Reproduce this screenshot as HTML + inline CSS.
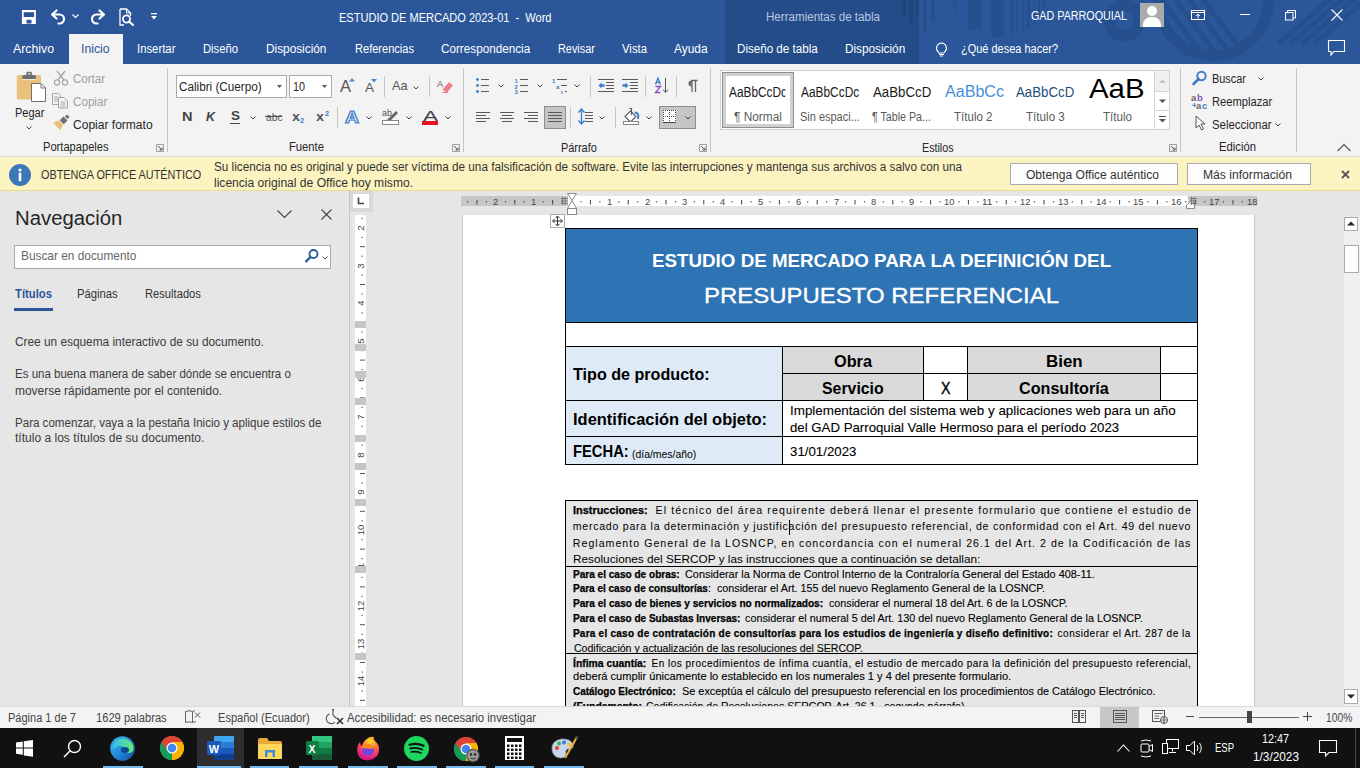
<!DOCTYPE html>
<html><head><meta charset="utf-8"><title>Word</title>
<style>
html,body{margin:0;padding:0;}
body{width:1360px;height:768px;overflow:hidden;position:relative;font-family:"Liberation Sans", sans-serif;background:#e6e6e6;}
svg{overflow:visible;}
</style></head><body>
<div style="position:absolute;left:0px;top:0px;width:1360px;height:64px;background:#2B579A"></div>
<div style="position:absolute;left:725px;top:0px;width:194px;height:64px;background:#244C88"></div>
<svg style="position:absolute;left:0px;top:0px;overflow:hidden" width="1360" height="64" viewBox="0 0 1360 64"><rect x="902" y="0" width="4" height="16" fill="rgba(15,35,75,0.16)"/><rect x="909" y="0" width="4" height="23" fill="rgba(15,35,75,0.16)"/><rect x="916" y="0" width="3" height="17" fill="rgba(15,35,75,0.16)"/><rect x="923" y="0" width="4" height="32" fill="rgba(15,35,75,0.16)"/><rect x="931" y="0" width="4" height="20" fill="rgba(15,35,75,0.16)"/><rect x="968" y="0" width="13" height="30" fill="rgba(15,35,75,0.16)"/><rect x="991" y="0" width="13" height="37" fill="rgba(15,35,75,0.16)"/><rect x="1011" y="0" width="2" height="36" fill="rgba(15,35,75,0.16)"/><rect x="1016" y="0" width="2" height="34" fill="rgba(15,35,75,0.16)"/><rect x="1022" y="0" width="2" height="32" fill="rgba(15,35,75,0.16)"/><rect x="1027" y="0" width="3" height="29" fill="rgba(15,35,75,0.16)"/><rect x="1034" y="0" width="1" height="25" fill="rgba(15,35,75,0.16)"/><rect x="1038" y="0" width="2" height="20" fill="rgba(15,35,75,0.16)"/><rect x="1043" y="0" width="2" height="15" fill="rgba(15,35,75,0.16)"/><rect x="1049" y="0" width="1" height="5" fill="rgba(15,35,75,0.16)"/><path d="M950 0 H957 V13 Z" fill="rgba(15,35,75,0.16)"/><circle cx="1124.6" cy="20.6" r="15" fill="none" stroke="rgba(15,35,75,0.16)" stroke-width="12"/><circle cx="1213.5" cy="0.5" r="55" fill="none" stroke="rgba(15,35,75,0.16)" stroke-width="11"/><clipPath id="bigc"><circle cx="1213.5" cy="0.5" r="49.5"/></clipPath><g clip-path="url(#bigc)" stroke="rgba(15,35,75,0.16)" stroke-width="5"><path d="M1140 -10 L1200 70"/><path d="M1154 -10 L1214 70"/><path d="M1168 -10 L1228 70"/><path d="M1182 -10 L1242 70"/><path d="M1196 -10 L1256 70"/></g><g stroke="rgba(15,35,75,0.16)" stroke-width="5.5"><path d="M1336 -6 L1278 44"/><path d="M1348 -6 L1290 44"/><path d="M1360 -6 L1302 44"/><path d="M1372 -6 L1314 44"/></g></svg>
<div style="position:absolute;left:69px;top:34px;width:54px;height:30px;background:#F3F3F3"></div>
<div style="position:absolute;left:0px;top:64px;width:1360px;height:92px;background:#F3F3F3"></div>
<div style="position:absolute;left:0px;top:156px;width:1360px;height:1px;background:#D6D6D6"></div>
<div style="position:absolute;left:0px;top:157px;width:1360px;height:34px;background:#FCF4C0"></div>
<div style="position:absolute;left:0px;top:190px;width:1360px;height:1px;background:#E8DC8C"></div>
<div style="position:absolute;left:0px;top:191px;width:349px;height:515px;background:#E6E6E6"></div>
<div style="position:absolute;left:349px;top:191px;width:1px;height:515px;background:#C6C6C6"></div>
<div style="position:absolute;left:350px;top:191px;width:1010px;height:515px;background:#E6E6E6"></div>
<div style="position:absolute;left:0px;top:706px;width:1360px;height:22px;background:#F3F3F3"></div>
<div style="position:absolute;left:0px;top:728px;width:1360px;height:40px;background:#111111"></div>
<span style="position:absolute;left:339px;top:10.64px;font-family:'Liberation Sans';font-size:12px;font-weight:normal;color:#FFFFFF;line-height:normal;white-space:pre;transform:scaleX(0.9192);transform-origin:0 0;">ESTUDIO DE MERCADO 2023-01  -  Word</span>
<span style="position:absolute;left:766px;top:9.64px;font-family:'Liberation Sans';font-size:12px;font-weight:normal;color:#B9C8E2;line-height:normal;white-space:pre;transform:scaleX(0.9656);transform-origin:0 0;">Herramientas de tabla</span>
<span style="position:absolute;left:1031px;top:9.14px;font-family:'Liberation Sans';font-size:12px;font-weight:normal;color:#FFFFFF;line-height:normal;white-space:pre;transform:scaleX(0.8961);transform-origin:0 0;">GAD PARROQUIAL</span>
<span style="position:absolute;left:12.7px;top:42.14px;font-family:'Liberation Sans';font-size:12px;font-weight:normal;color:#FFFFFF;line-height:normal;white-space:pre;transform:scaleX(1.0246);transform-origin:0 0;">Archivo</span>
<span style="position:absolute;left:80.7px;top:42.14px;font-family:'Liberation Sans';font-size:12px;font-weight:normal;color:#2B579A;line-height:normal;white-space:pre;transform:scaleX(1.0209);transform-origin:0 0;">Inicio</span>
<span style="position:absolute;left:137.4px;top:42.14px;font-family:'Liberation Sans';font-size:12px;font-weight:normal;color:#FFFFFF;line-height:normal;white-space:pre;transform:scaleX(0.9439);transform-origin:0 0;">Insertar</span>
<span style="position:absolute;left:203.3px;top:42.14px;font-family:'Liberation Sans';font-size:12px;font-weight:normal;color:#FFFFFF;line-height:normal;white-space:pre;transform:scaleX(0.9370);transform-origin:0 0;">Diseño</span>
<span style="position:absolute;left:266px;top:42.14px;font-family:'Liberation Sans';font-size:12px;font-weight:normal;color:#FFFFFF;line-height:normal;white-space:pre;transform:scaleX(0.9844);transform-origin:0 0;">Disposición</span>
<span style="position:absolute;left:354.5px;top:42.14px;font-family:'Liberation Sans';font-size:12px;font-weight:normal;color:#FFFFFF;line-height:normal;white-space:pre;transform:scaleX(0.9214);transform-origin:0 0;">Referencias</span>
<span style="position:absolute;left:441.4px;top:42.14px;font-family:'Liberation Sans';font-size:12px;font-weight:normal;color:#FFFFFF;line-height:normal;white-space:pre;transform:scaleX(0.9761);transform-origin:0 0;">Correspondencia</span>
<span style="position:absolute;left:558px;top:42.14px;font-family:'Liberation Sans';font-size:12px;font-weight:normal;color:#FFFFFF;line-height:normal;white-space:pre;transform:scaleX(0.9047);transform-origin:0 0;">Revisar</span>
<span style="position:absolute;left:621.6px;top:42.14px;font-family:'Liberation Sans';font-size:12px;font-weight:normal;color:#FFFFFF;line-height:normal;white-space:pre;transform:scaleX(0.9448);transform-origin:0 0;">Vista</span>
<span style="position:absolute;left:673.9px;top:42.14px;font-family:'Liberation Sans';font-size:12px;font-weight:normal;color:#FFFFFF;line-height:normal;white-space:pre;transform:scaleX(0.9909);transform-origin:0 0;">Ayuda</span>
<span style="position:absolute;left:737px;top:42.14px;font-family:'Liberation Sans';font-size:12px;font-weight:normal;color:#FFFFFF;line-height:normal;white-space:pre;transform:scaleX(0.9677);transform-origin:0 0;">Diseño de tabla</span>
<span style="position:absolute;left:845.3px;top:42.14px;font-family:'Liberation Sans';font-size:12px;font-weight:normal;color:#FFFFFF;line-height:normal;white-space:pre;transform:scaleX(0.9811);transform-origin:0 0;">Disposición</span>
<span style="position:absolute;left:961px;top:42.14px;font-family:'Liberation Sans';font-size:12px;font-weight:normal;color:#FFFFFF;line-height:normal;white-space:pre;transform:scaleX(0.9145);transform-origin:0 0;">¿Qué desea hacer?</span>
<svg style="position:absolute;left:21px;top:9px;" width="16" height="16" viewBox="0 0 16 16"><path d="M1.8 1.8 H14 V14.2 H1.8 Z" fill="none" stroke="#fff" stroke-width="1.8"/><rect x="1" y="1" width="14" height="2.2" fill="#fff"/><rect x="2" y="8" width="12" height="6.5" fill="#fff"/><rect x="5.5" y="10.8" width="5" height="3.7" fill="#2B579A"/></svg>
<svg style="position:absolute;left:50px;top:9px;" width="17" height="15" viewBox="0 0 17 15"><path d="M2 5.5 L6.5 1.5 M2 5.5 L6.5 9.5 M2.5 5.5 H9.5 A4.5 4.5 0 0 1 9.5 14.5 H8.5" fill="none" stroke="#fff" stroke-width="2.2" stroke-linecap="round"/></svg>
<svg style="position:absolute;left:72px;top:14px;" width="7" height="5" viewBox="0 0 7 5"><path d="M0.5 0.5 L3.5 3.5 L6.5 0.5" fill="none" stroke="#fff" stroke-width="1.1"/></svg>
<svg style="position:absolute;left:89px;top:9px;" width="17" height="15" viewBox="0 0 17 15"><path d="M15 5.5 L10.5 1.5 M15 5.5 L10.5 9.5 M14.5 5.5 H7.5 A4.5 4.5 0 0 0 7.5 14.5 H8.5" fill="none" stroke="#fff" stroke-width="2.2" stroke-linecap="round"/></svg>
<svg style="position:absolute;left:119px;top:8px;" width="16" height="18" viewBox="0 0 16 18"><path d="M1 1 H7.5 L11.5 5 V8" fill="none" stroke="#fff" stroke-width="1.3"/><path d="M7.5 1 V5 H11.5" fill="none" stroke="#fff" stroke-width="1"/><path d="M1 1 V17 H5" fill="none" stroke="#fff" stroke-width="1.3"/><circle cx="7.5" cy="11" r="3.6" fill="none" stroke="#fff" stroke-width="1.7"/><path d="M10 13.5 L14 17" stroke="#fff" stroke-width="2.2" stroke-linecap="round"/></svg>
<svg style="position:absolute;left:151px;top:13px;" width="7" height="8" viewBox="0 0 7 8"><rect x="0" y="0" width="6" height="1.3" fill="#fff"/><path d="M0 3 H6 L3 6.5 Z" fill="#fff"/></svg>
<div style="position:absolute;left:1140px;top:3px;width:24px;height:24px;background:#ABABAB;overflow:hidden"><div style="position:absolute;left:7px;top:3px;width:10px;height:10px;border-radius:50%;background:#fff"></div><div style="position:absolute;left:3px;top:14px;width:18px;height:14px;border-radius:8px 8px 0 0;background:#fff"></div></div>
<svg style="position:absolute;left:1191px;top:10px;" width="15" height="11" viewBox="0 0 15 11"><rect x="0.5" y="0.5" width="13" height="9" fill="none" stroke="#fff" stroke-width="1"/><path d="M0.5 2.5 H13.5" stroke="#fff"/><path d="M7 8.5 V4 M5 6 L7 4 L9 6" fill="none" stroke="#fff" stroke-width="1"/></svg>
<svg style="position:absolute;left:1240px;top:14px;" width="11" height="2" viewBox="0 0 11 2"><rect x="0" y="0" width="10" height="1" fill="#fff"/></svg>
<svg style="position:absolute;left:1285px;top:10px;" width="11" height="11" viewBox="0 0 11 11"><rect x="0.5" y="2.5" width="7.5" height="7.5" fill="none" stroke="#fff"/><path d="M2.5 2.5 V0.5 H10.5 V8 H8" fill="none" stroke="#fff"/></svg>
<svg style="position:absolute;left:1331px;top:9px;" width="12" height="12" viewBox="0 0 12 12"><path d="M0.5 0.5 L11.5 11.5 M11.5 0.5 L0.5 11.5" stroke="#fff" stroke-width="1.1"/></svg>
<svg style="position:absolute;left:935px;top:42px;" width="13" height="15" viewBox="0 0 13 15"><path d="M6.5 1 A5 5 0 0 0 3 9.5 L4 11 H9 L10 9.5 A5 5 0 0 0 6.5 1 Z" fill="none" stroke="#fff" stroke-width="1.1"/><path d="M4 12.5 H9 M5 14 H8" stroke="#fff" stroke-width="1"/></svg>
<svg style="position:absolute;left:1328px;top:40px;" width="18" height="17" viewBox="0 0 18 17"><path d="M0.5 0.5 H16.5 V11.5 H6 L3 15 V11.5 H0.5 Z" fill="none" stroke="#fff" stroke-width="1.1"/></svg>
<svg style="position:absolute;left:16px;top:71px;" width="31" height="32" viewBox="0 0 31 32"><rect x="0.8" y="4" width="24.2" height="24.6" rx="1.5" fill="#EAC17A"/><path d="M6.3 8 V5.5 Q6.3 4 7.8 4 H18.5 Q20 4 20 5.5 V8 Z" fill="#6E6E6E"/><rect x="10.4" y="0.8" width="5.4" height="4" rx="1" fill="#6E6E6E"/><rect x="12.3" y="2" width="1.6" height="1.6" fill="#F3F3F3"/><path d="M6.3 8.5 H20" stroke="#F3F3F3" stroke-width="0.8"/><path d="M15.5 12.5 H25 L29.5 17 V30.5 H15.5 Z" fill="#fff" stroke="#6E6E6E" stroke-width="1"/><path d="M25 12.5 V17 H29.5" fill="none" stroke="#6E6E6E" stroke-width="0.9"/></svg>
<span style="position:absolute;left:14.6px;top:106.04px;font-family:'Liberation Sans';font-size:12px;font-weight:normal;color:#262626;line-height:normal;white-space:pre;transform:scaleX(0.9181);transform-origin:0 0;">Pegar</span>
<svg style="position:absolute;left:26px;top:126px;" width="7" height="5" viewBox="0 0 7 5"><path d="M0.5 0.5 L3 3 L5.5 0.5" fill="none" stroke="#444" stroke-width="1"/></svg>
<svg style="position:absolute;left:53px;top:70px;" width="16" height="16" viewBox="0 0 16 16"><path d="M4 1 L11 10 M12 1 L5 10" stroke="#A6A6A6" stroke-width="1.3"/><circle cx="4" cy="12.5" r="2.6" fill="none" stroke="#A6A6A6" stroke-width="1.2"/><circle cx="12" cy="12.5" r="2.6" fill="none" stroke="#A6A6A6" stroke-width="1.2"/></svg>
<span style="position:absolute;left:72.7px;top:71.94px;font-family:'Liberation Sans';font-size:12px;font-weight:normal;color:#A0A0A0;line-height:normal;white-space:pre;transform:scaleX(0.9598);transform-origin:0 0;">Cortar</span>
<svg style="position:absolute;left:52px;top:93px;" width="17" height="16" viewBox="0 0 17 16"><path d="M0.5 0.5 H6.5 L8.5 2.5 V11.5 H0.5 Z" fill="#F7F2F7" stroke="#A6A6A6"/><path d="M6.5 4.5 H12 L15.5 8 V15 H6.5 Z" fill="#F7F2F7" stroke="#A6A6A6"/><path d="M2 4 H6 M2 6 H6 M2 8 H6 M8.5 9 H13.5 M8.5 11 H13.5 M8.5 13 H13.5" stroke="#A6A6A6" stroke-width="0.9"/></svg>
<span style="position:absolute;left:72.7px;top:94.94px;font-family:'Liberation Sans';font-size:12px;font-weight:normal;color:#A0A0A0;line-height:normal;white-space:pre;transform:scaleX(0.9703);transform-origin:0 0;">Copiar</span>
<svg style="position:absolute;left:52px;top:115px;" width="18" height="17" viewBox="0 0 18 17"><path d="M1 7.5 L7 5.5 L11 9.5 L8.5 15.5 Z" fill="#EAC17A"/><path d="M7.8 5.2 L11.5 1.5 L15.5 5.5 L11.8 9.2 Z" fill="#6E6E6E"/><path d="M13 1.5 L15 -0.5 L17.5 2 L15.5 4 Z" fill="#6E6E6E"/></svg>
<span style="position:absolute;left:72.7px;top:117.74px;font-family:'Liberation Sans';font-size:12px;font-weight:normal;color:#262626;line-height:normal;white-space:pre;transform:scaleX(1.0030);transform-origin:0 0;">Copiar formato</span>
<span style="position:absolute;left:42.7px;top:140.14px;font-family:'Liberation Sans';font-size:12px;font-weight:normal;color:#262626;line-height:normal;white-space:pre;transform:scaleX(0.9276);transform-origin:0 0;">Portapapeles</span>
<svg style="position:absolute;left:156px;top:144px;" width="8" height="8" viewBox="0 0 8 8"><path d="M0.5 0.5 H7.5 V7.5 H0.5 Z" fill="none" stroke="#8A8A8A" stroke-width="0.8"/><path d="M2 2 L6 6 M6 3.5 V6 H3.5" fill="none" stroke="#555" stroke-width="1"/></svg>
<div style="position:absolute;left:167px;top:68px;width:1px;height:84px;background:#C6C6C6"></div>
<div style="position:absolute;left:176px;top:75px;width:109px;height:21px;background:#fff;border:1px solid #ABABAB"></div>
<span style="position:absolute;left:179.3px;top:79.64px;font-family:'Liberation Sans';font-size:12px;font-weight:normal;color:#262626;line-height:normal;white-space:pre;transform:scaleX(0.9765);transform-origin:0 0;">Calibri (Cuerpo)</span>
<svg style="position:absolute;left:277px;top:85px;" width="6" height="4" viewBox="0 0 6 4"><path d="M0 0 H5 L2.5 3 Z" fill="#555"/></svg>
<div style="position:absolute;left:289px;top:75px;width:41px;height:21px;background:#fff;border:1px solid #ABABAB"></div>
<span style="position:absolute;left:292.5px;top:79.64px;font-family:'Liberation Sans';font-size:12px;font-weight:normal;color:#262626;line-height:normal;white-space:pre;transform:scaleX(0.8990);transform-origin:0 0;">10</span>
<svg style="position:absolute;left:322px;top:85px;" width="6" height="4" viewBox="0 0 6 4"><path d="M0 0 H5 L2.5 3 Z" fill="#555"/></svg>
<span style="position:absolute;left:340px;top:77.52px;font-family:'Liberation Sans';font-size:16px;font-weight:normal;color:#555;line-height:normal;white-space:pre;transform:scaleX(1.0307);transform-origin:0 0;">A</span>
<svg style="position:absolute;left:349px;top:78px;" width="6" height="4" viewBox="0 0 6 4"><path d="M0 3.5 L3 0 L6 3.5 Z" fill="#4A8BD0"/></svg>
<span style="position:absolute;left:365px;top:80.23px;font-family:'Liberation Sans';font-size:13px;font-weight:normal;color:#555;line-height:normal;white-space:pre;transform:scaleX(1.0380);transform-origin:0 0;">A</span>
<svg style="position:absolute;left:371px;top:79px;" width="6" height="4" viewBox="0 0 6 4"><path d="M0 0 L3 3.5 L6 0 Z" fill="#4A8BD0"/></svg>
<div style="position:absolute;left:384px;top:76px;width:1px;height:21px;background:#C6C6C6"></div>
<span style="position:absolute;left:392px;top:78.28px;font-family:'Liberation Sans';font-size:13.5px;font-weight:normal;color:#555;line-height:normal;white-space:pre;transform:scaleX(0.9387);transform-origin:0 0;">Aa</span>
<svg style="position:absolute;left:413px;top:86px;" width="7" height="5" viewBox="0 0 7 5"><path d="M0.5 0.5 L3 3 L5.5 0.5" fill="none" stroke="#444" stroke-width="1"/></svg>
<div style="position:absolute;left:429px;top:76px;width:1px;height:21px;background:#C6C6C6"></div>
<svg style="position:absolute;left:437px;top:78px;" width="17" height="16" viewBox="0 0 17 16"><text x="0" y="9" font-family="Liberation Sans" font-size="9" fill="#555">A</text><path d="M6 11 L12 4 L16 7.5 L10 14.5 Z" fill="#E8818A"/><path d="M6 11 L10 14.5 H5.5" fill="none" stroke="#E8818A" stroke-width="1.2"/></svg>
<span style="position:absolute;left:181.5px;top:109.69px;font-family:'Liberation Sans';font-size:12.5px;font-weight:bold;color:#444;line-height:normal;white-space:pre;transform:scaleX(1.1632);transform-origin:0 0;">N</span>
<span style="position:absolute;left:205.5px;top:109.69px;font-family:'Liberation Sans';font-size:12.5px;font-weight:bold;color:#444;line-height:normal;white-space:pre;transform:scaleX(0.9970);transform-origin:0 0;font-style:italic">K</span>
<span style="position:absolute;left:230.5px;top:109.19px;font-family:'Liberation Sans';font-size:12.5px;font-weight:bold;color:#444;line-height:normal;white-space:pre;transform:scaleX(1.0795);transform-origin:0 0;">S</span>
<div style="position:absolute;left:230px;top:123px;width:10px;height:1px;background:#444"></div>
<svg style="position:absolute;left:250px;top:116px;" width="7" height="5" viewBox="0 0 7 5"><path d="M0.5 0.5 L3 3 L5.5 0.5" fill="none" stroke="#444" stroke-width="1"/></svg>
<span style="position:absolute;left:265.5px;top:110.55px;font-family:'Liberation Sans';font-size:11px;font-weight:normal;color:#555;line-height:normal;white-space:pre;transform:scaleX(0.9303);transform-origin:0 0;">abc</span>
<div style="position:absolute;left:265px;top:116px;width:17px;height:1px;background:#555"></div>
<span style="position:absolute;left:291.5px;top:109.23px;font-family:'Liberation Sans';font-size:13px;font-weight:bold;color:#555;line-height:normal;white-space:pre;transform:scaleX(1.1065);transform-origin:0 0;">x</span>
<span style="position:absolute;left:300px;top:116.67px;font-family:'Liberation Sans';font-size:7px;font-weight:bold;color:#3B7BC8;line-height:normal;white-space:pre;transform:scaleX(1.0275);transform-origin:0 0;">2</span>
<span style="position:absolute;left:316px;top:109.23px;font-family:'Liberation Sans';font-size:13px;font-weight:bold;color:#555;line-height:normal;white-space:pre;transform:scaleX(1.1065);transform-origin:0 0;">x</span>
<span style="position:absolute;left:325px;top:109.67px;font-family:'Liberation Sans';font-size:7px;font-weight:bold;color:#3B7BC8;line-height:normal;white-space:pre;transform:scaleX(1.0275);transform-origin:0 0;">2</span>
<div style="position:absolute;left:337px;top:107px;width:1px;height:21px;background:#C6C6C6"></div>
<span style="position:absolute;left:345px;top:108.07px;font-family:'Liberation Sans';font-size:16.5px;font-weight:bold;color:#fff;line-height:normal;white-space:pre;transform:scaleX(1.1749);transform-origin:0 0;-webkit-text-stroke:1.2px #3F7FCB">A</span>
<svg style="position:absolute;left:366px;top:116px;" width="7" height="5" viewBox="0 0 7 5"><path d="M0.5 0.5 L3 3 L5.5 0.5" fill="none" stroke="#444" stroke-width="1"/></svg>
<svg style="position:absolute;left:382px;top:108px;" width="18" height="18" viewBox="0 0 18 18"><text x="0" y="8" font-family="Liberation Sans" font-size="9" fill="#555">ab</text><path d="M5 12 L14 3 L16 5 L7 14 Z" fill="#666"/><rect x="0.5" y="12.5" width="16" height="4" fill="#fff" stroke="#888"/></svg>
<svg style="position:absolute;left:406px;top:116px;" width="7" height="5" viewBox="0 0 7 5"><path d="M0.5 0.5 L3 3 L5.5 0.5" fill="none" stroke="#444" stroke-width="1"/></svg>
<span style="position:absolute;left:422.5px;top:106.92px;font-family:'Liberation Sans';font-size:15px;font-weight:normal;color:#444;line-height:normal;white-space:pre;transform:scaleX(1.4993);transform-origin:0 0;">A</span>
<div style="position:absolute;left:422px;top:121px;width:16px;height:4px;background:#E81123"></div>
<svg style="position:absolute;left:445px;top:116px;" width="7" height="5" viewBox="0 0 7 5"><path d="M0.5 0.5 L3 3 L5.5 0.5" fill="none" stroke="#444" stroke-width="1"/></svg>
<span style="position:absolute;left:289px;top:140.24px;font-family:'Liberation Sans';font-size:12px;font-weight:normal;color:#262626;line-height:normal;white-space:pre;transform:scaleX(0.9368);transform-origin:0 0;">Fuente</span>
<svg style="position:absolute;left:452px;top:144px;" width="8" height="8" viewBox="0 0 8 8"><path d="M0.5 0.5 H7.5 V7.5 H0.5 Z" fill="none" stroke="#8A8A8A" stroke-width="0.8"/><path d="M2 2 L6 6 M6 3.5 V6 H3.5" fill="none" stroke="#555" stroke-width="1"/></svg>
<div style="position:absolute;left:463px;top:68px;width:1px;height:84px;background:#C6C6C6"></div>
<svg style="position:absolute;left:475px;top:77px;" width="15" height="16" viewBox="0 0 15 16"><g shape-rendering="crispEdges"><rect x="6" y="2" width="8" height="1" fill="#5A5A5A"/><rect x="6" y="8" width="8" height="1" fill="#5A5A5A"/><rect x="6" y="14" width="8" height="1" fill="#5A5A5A"/></g><circle cx="2.5" cy="2.5" r="1.4" fill="#3B7BC8"/><circle cx="2.5" cy="8.5" r="1.4" fill="#3B7BC8"/><circle cx="2.5" cy="14.5" r="1.4" fill="#3B7BC8"/></svg>
<svg style="position:absolute;left:498px;top:84px;" width="7" height="5" viewBox="0 0 7 5"><path d="M0.5 0.5 L3 3 L5.5 0.5" fill="none" stroke="#444" stroke-width="1"/></svg>
<svg style="position:absolute;left:514px;top:77px;" width="16" height="17" viewBox="0 0 16 17"><text x="0.5" y="5.5" font-family="Liberation Sans" font-size="6" font-weight="bold" fill="#3B7BC8">1</text><text x="0.5" y="11.5" font-family="Liberation Sans" font-size="6" font-weight="bold" fill="#3B7BC8">2</text><text x="0.5" y="17" font-family="Liberation Sans" font-size="6" font-weight="bold" fill="#3B7BC8">3</text><g shape-rendering="crispEdges"><rect x="6" y="2" width="8" height="1" fill="#5A5A5A"/><rect x="6" y="8" width="8" height="1" fill="#5A5A5A"/><rect x="6" y="14" width="8" height="1" fill="#5A5A5A"/></g></svg>
<svg style="position:absolute;left:537px;top:84px;" width="7" height="5" viewBox="0 0 7 5"><path d="M0.5 0.5 L3 3 L5.5 0.5" fill="none" stroke="#444" stroke-width="1"/></svg>
<svg style="position:absolute;left:552px;top:77px;" width="18" height="17" viewBox="0 0 18 17"><text x="0" y="5.5" font-family="Liberation Sans" font-size="6" font-weight="bold" fill="#3B7BC8">1</text><text x="4" y="11.5" font-family="Liberation Sans" font-size="6" font-weight="bold" fill="#3B7BC8">a</text><text x="9" y="17" font-family="Liberation Sans" font-size="6" font-weight="bold" fill="#3B7BC8">i</text><g shape-rendering="crispEdges"><rect x="5" y="2" width="10" height="1" fill="#5A5A5A"/><rect x="9" y="8" width="6" height="1" fill="#5A5A5A"/><rect x="13" y="14" width="2" height="1" fill="#5A5A5A"/></g></svg>
<svg style="position:absolute;left:574px;top:84px;" width="7" height="5" viewBox="0 0 7 5"><path d="M0.5 0.5 L3 3 L5.5 0.5" fill="none" stroke="#444" stroke-width="1"/></svg>
<div style="position:absolute;left:590px;top:76px;width:1px;height:21px;background:#C6C6C6"></div>
<svg style="position:absolute;left:598px;top:79px;" width="17" height="13" viewBox="0 0 17 13"><g shape-rendering="crispEdges"><rect x="0" y="0" width="16" height="1" fill="#5A5A5A"/><rect x="8" y="3" width="8" height="1" fill="#5A5A5A"/><rect x="8" y="6" width="8" height="1" fill="#5A5A5A"/><rect x="8" y="9" width="8" height="1" fill="#5A5A5A"/><rect x="0" y="12" width="16" height="1" fill="#5A5A5A"/></g><path d="M0.5 6.5 L3.5 3.5 V5.3 H6.5 V7.7 H3.5 V9.5 Z" fill="#3B7BC8"/></svg>
<svg style="position:absolute;left:622px;top:79px;" width="17" height="13" viewBox="0 0 17 13"><g shape-rendering="crispEdges"><rect x="0" y="0" width="16" height="1" fill="#5A5A5A"/><rect x="8" y="3" width="8" height="1" fill="#5A5A5A"/><rect x="8" y="6" width="8" height="1" fill="#5A5A5A"/><rect x="8" y="9" width="8" height="1" fill="#5A5A5A"/><rect x="0" y="12" width="16" height="1" fill="#5A5A5A"/></g><path d="M6.5 6.5 L3.5 3.5 V5.3 H0.5 V7.7 H3.5 V9.5 Z" fill="#3B7BC8"/></svg>
<div style="position:absolute;left:645px;top:76px;width:1px;height:21px;background:#C6C6C6"></div>
<svg style="position:absolute;left:654px;top:77px;" width="15" height="17" viewBox="0 0 15 17"><path d="M1.5 7.5 L4 1 L6.5 7.5 M2.5 5.3 H5.5" fill="none" stroke="#3B7BC8" stroke-width="1.3"/><path d="M1.5 9.5 H6.5 L1.5 15.5 H6.5" fill="none" stroke="#8B4FB8" stroke-width="1.3"/><path d="M11.5 1 V15 M9 12.5 L11.5 15.5 L14 12.5" fill="none" stroke="#555" stroke-width="1"/></svg>
<div style="position:absolute;left:676px;top:76px;width:1px;height:21px;background:#C6C6C6"></div>
<svg style="position:absolute;left:687px;top:80px;" width="11" height="12" viewBox="0 0 11 12"><path d="M4 0.5 H10.5 M5 0.5 V12 M8.5 0.5 V12" stroke="#666" stroke-width="1.3" fill="none"/><path d="M4.5 0.5 A3 3 0 0 0 4.5 6.5 Z" fill="#666"/></svg>
<svg style="position:absolute;left:476px;top:112px;" width="15" height="10" viewBox="0 0 15 10"><g shape-rendering="crispEdges"><rect x="0" y="0" width="14" height="1" fill="#5A5A5A"/><rect x="0" y="3" width="10" height="1" fill="#5A5A5A"/><rect x="0" y="6" width="14" height="1" fill="#5A5A5A"/><rect x="0" y="9" width="10" height="1" fill="#5A5A5A"/></g></svg>
<svg style="position:absolute;left:500px;top:112px;" width="15" height="10" viewBox="0 0 15 10"><g shape-rendering="crispEdges"><rect x="0" y="0" width="14" height="1" fill="#5A5A5A"/><rect x="2" y="3" width="10" height="1" fill="#5A5A5A"/><rect x="0" y="6" width="14" height="1" fill="#5A5A5A"/><rect x="2" y="9" width="10" height="1" fill="#5A5A5A"/></g></svg>
<svg style="position:absolute;left:524px;top:112px;" width="15" height="10" viewBox="0 0 15 10"><g shape-rendering="crispEdges"><rect x="0" y="0" width="14" height="1" fill="#5A5A5A"/><rect x="4" y="3" width="10" height="1" fill="#5A5A5A"/><rect x="0" y="6" width="14" height="1" fill="#5A5A5A"/><rect x="4" y="9" width="10" height="1" fill="#5A5A5A"/></g></svg>
<div style="position:absolute;left:544px;top:106px;width:20px;height:21px;background:#C5C5C5;border:1px solid #8E8E8E"></div>
<svg style="position:absolute;left:548px;top:112px;" width="15" height="10" viewBox="0 0 15 10"><g shape-rendering="crispEdges"><rect x="0" y="0" width="14" height="1" fill="#5A5A5A"/><rect x="0" y="3" width="14" height="1" fill="#5A5A5A"/><rect x="0" y="6" width="14" height="1" fill="#5A5A5A"/><rect x="0" y="9" width="14" height="1" fill="#5A5A5A"/></g></svg>
<div style="position:absolute;left:570px;top:107px;width:1px;height:21px;background:#C6C6C6"></div>
<svg style="position:absolute;left:578px;top:108px;" width="16" height="18" viewBox="0 0 16 18"><path d="M3.5 2 V15" stroke="#3B7BC8" stroke-width="1.3"/><path d="M0.5 4.5 L3.5 1 L6.5 4.5 M0.5 12.5 L3.5 16 L6.5 12.5" fill="none" stroke="#3B7BC8" stroke-width="1.4"/><g shape-rendering="crispEdges"><rect x="7" y="4" width="8" height="1" fill="#5A5A5A"/><rect x="7" y="7" width="8" height="1" fill="#5A5A5A"/><rect x="7" y="10" width="8" height="1" fill="#5A5A5A"/><rect x="7" y="13" width="8" height="1" fill="#5A5A5A"/></g></svg>
<svg style="position:absolute;left:599px;top:116px;" width="7" height="5" viewBox="0 0 7 5"><path d="M0.5 0.5 L3 3 L5.5 0.5" fill="none" stroke="#444" stroke-width="1"/></svg>
<div style="position:absolute;left:615px;top:107px;width:1px;height:21px;background:#C6C6C6"></div>
<svg style="position:absolute;left:622px;top:108px;" width="18" height="17" viewBox="0 0 18 17"><path d="M3 8.5 L8.5 3 L14 8.5 L8.5 14 Z" fill="#fff" stroke="#5A5A5A" stroke-width="1.1"/><path d="M7.5 0.5 H9.5 V7" fill="none" stroke="#5A5A5A" stroke-width="1.1"/><path d="M12.5 4.5 Q17.5 4.5 16 11" fill="none" stroke="#3B7BC8" stroke-width="2"/><rect x="1.5" y="13.5" width="15" height="3" fill="#fff" stroke="#888"/></svg>
<svg style="position:absolute;left:646px;top:116px;" width="7" height="5" viewBox="0 0 7 5"><path d="M0.5 0.5 L3 3 L5.5 0.5" fill="none" stroke="#444" stroke-width="1"/></svg>
<div style="position:absolute;left:659px;top:106px;width:35px;height:21px;background:#C5C5C5;border:1px solid #8E8E8E"></div>
<svg style="position:absolute;left:663px;top:110px;" width="14" height="14" viewBox="0 0 14 14"><rect x="0" y="0" width="13" height="12" fill="#fff"/><g shape-rendering="crispEdges" fill="#444"><rect x="0" y="0" width="1" height="1"/><rect x="0" y="6" width="1" height="1"/><rect x="2" y="0" width="1" height="1"/><rect x="2" y="6" width="1" height="1"/><rect x="4" y="0" width="1" height="1"/><rect x="4" y="6" width="1" height="1"/><rect x="6" y="0" width="1" height="1"/><rect x="6" y="6" width="1" height="1"/><rect x="8" y="0" width="1" height="1"/><rect x="8" y="6" width="1" height="1"/><rect x="10" y="0" width="1" height="1"/><rect x="10" y="6" width="1" height="1"/><rect x="12" y="0" width="1" height="1"/><rect x="12" y="6" width="1" height="1"/><rect x="0" y="2" width="1" height="1"/><rect x="0" y="4" width="1" height="1"/><rect x="0" y="6" width="1" height="1"/><rect x="0" y="8" width="1" height="1"/><rect x="0" y="10" width="1" height="1"/><rect x="6" y="2" width="1" height="1"/><rect x="6" y="4" width="1" height="1"/><rect x="6" y="6" width="1" height="1"/><rect x="6" y="8" width="1" height="1"/><rect x="6" y="10" width="1" height="1"/><rect x="12" y="2" width="1" height="1"/><rect x="12" y="4" width="1" height="1"/><rect x="12" y="6" width="1" height="1"/><rect x="12" y="8" width="1" height="1"/><rect x="12" y="10" width="1" height="1"/><rect x="0" y="12" width="13" height="1"/></g></svg>
<svg style="position:absolute;left:685px;top:116px;" width="7" height="5" viewBox="0 0 7 5"><path d="M0.5 0.5 L3 3 L5.5 0.5" fill="none" stroke="#333" stroke-width="1"/></svg>
<span style="position:absolute;left:560.6px;top:140.54px;font-family:'Liberation Sans';font-size:12px;font-weight:normal;color:#262626;line-height:normal;white-space:pre;transform:scaleX(0.9097);transform-origin:0 0;">Párrafo</span>
<svg style="position:absolute;left:699px;top:144px;" width="8" height="8" viewBox="0 0 8 8"><path d="M0.5 0.5 H7.5 V7.5 H0.5 Z" fill="none" stroke="#8A8A8A" stroke-width="0.8"/><path d="M2 2 L6 6 M6 3.5 V6 H3.5" fill="none" stroke="#555" stroke-width="1"/></svg>
<div style="position:absolute;left:710px;top:68px;width:1px;height:84px;background:#C6C6C6"></div>
<div style="position:absolute;left:720px;top:70px;width:448px;height:58px;background:#fff;border:1px solid #D0D0D0"></div>
<div style="position:absolute;left:722px;top:72px;width:70px;height:54px;border:1px solid #8E8E8E;box-shadow:inset 0 0 0 3px #D0D0D0;background:#fff"></div>
<span style="position:absolute;left:728.8px;top:84.33px;font-family:'Liberation Sans';font-size:14px;font-weight:normal;color:#1A1A1A;line-height:normal;white-space:pre;transform:scaleX(0.8471);transform-origin:0 0;clip-path:inset(0 2px 0 0)">AaBbCcDc</span>
<span style="position:absolute;left:733.5px;top:110.24px;font-family:'Liberation Sans';font-size:12px;font-weight:normal;color:#5A5A5A;line-height:normal;white-space:pre;transform:scaleX(0.9886);transform-origin:0 0;">¶ Normal</span>
<span style="position:absolute;left:800.6px;top:84.33px;font-family:'Liberation Sans';font-size:14px;font-weight:normal;color:#1A1A1A;line-height:normal;white-space:pre;transform:scaleX(0.8500);transform-origin:0 0;">AaBbCcDc</span>
<span style="position:absolute;left:799.5px;top:110.24px;font-family:'Liberation Sans';font-size:12px;font-weight:normal;color:#5A5A5A;line-height:normal;white-space:pre;transform:scaleX(0.9148);transform-origin:0 0;">Sin espaci...</span>
<span style="position:absolute;left:872.5px;top:84.33px;font-family:'Liberation Sans';font-size:14px;font-weight:normal;color:#1A1A1A;line-height:normal;white-space:pre;transform:scaleX(0.9468);transform-origin:0 0;">AaBbCcD</span>
<span style="position:absolute;left:871.6px;top:110.24px;font-family:'Liberation Sans';font-size:12px;font-weight:normal;color:#5A5A5A;line-height:normal;white-space:pre;transform:scaleX(0.8890);transform-origin:0 0;">¶ Table Pa...</span>
<span style="position:absolute;left:944.5px;top:82.52px;font-family:'Liberation Sans';font-size:16px;font-weight:normal;color:#4A8ED6;line-height:normal;white-space:pre;transform:scaleX(1.0052);transform-origin:0 0;">AaBbCc</span>
<span style="position:absolute;left:954px;top:110.24px;font-family:'Liberation Sans';font-size:12px;font-weight:normal;color:#5A5A5A;line-height:normal;white-space:pre;transform:scaleX(0.9620);transform-origin:0 0;">Título 2</span>
<span style="position:absolute;left:1016.4px;top:84.33px;font-family:'Liberation Sans';font-size:14px;font-weight:normal;color:#1F4E79;line-height:normal;white-space:pre;transform:scaleX(0.9468);transform-origin:0 0;">AaBbCcD</span>
<span style="position:absolute;left:1026px;top:110.24px;font-family:'Liberation Sans';font-size:12px;font-weight:normal;color:#5A5A5A;line-height:normal;white-space:pre;transform:scaleX(0.9695);transform-origin:0 0;">Título 3</span>
<span style="position:absolute;left:1088.7px;top:73.06px;font-family:'Liberation Sans';font-size:28px;font-weight:normal;color:#000;line-height:normal;white-space:pre;transform:scaleX(1.0506);transform-origin:0 0;">AaB</span>
<span style="position:absolute;left:1103px;top:110.24px;font-family:'Liberation Sans';font-size:12px;font-weight:normal;color:#5A5A5A;line-height:normal;white-space:pre;transform:scaleX(0.9663);transform-origin:0 0;">Título</span>
<div style="position:absolute;left:1154px;top:70px;width:1px;height:59px;background:#D4D4D4"></div>
<div style="position:absolute;left:1155px;top:71px;width:14px;height:20px;background:#F0F0F0"></div>
<svg style="position:absolute;left:1159px;top:79px;" width="8" height="5" viewBox="0 0 8 5"><path d="M0 4 L3.5 0.5 L7 4 Z" fill="#C0C0C0"/></svg>
<div style="position:absolute;left:1155px;top:91px;width:14px;height:1px;background:#D4D4D4"></div>
<svg style="position:absolute;left:1159px;top:99px;" width="8" height="5" viewBox="0 0 8 5"><path d="M0 0.5 L3.5 4 L7 0.5 Z" fill="#555"/></svg>
<div style="position:absolute;left:1155px;top:110px;width:14px;height:1px;background:#D4D4D4"></div>
<svg style="position:absolute;left:1159px;top:116px;" width="8" height="8" viewBox="0 0 8 8"><rect x="0" y="0" width="7" height="1" fill="#555"/><path d="M0 3 L3.5 6.5 L7 3 Z" fill="#555"/></svg>
<span style="position:absolute;left:921.5px;top:140.54px;font-family:'Liberation Sans';font-size:12px;font-weight:normal;color:#262626;line-height:normal;white-space:pre;transform:scaleX(0.8912);transform-origin:0 0;">Estilos</span>
<svg style="position:absolute;left:1169px;top:144px;" width="8" height="8" viewBox="0 0 8 8"><path d="M0.5 0.5 H7.5 V7.5 H0.5 Z" fill="none" stroke="#8A8A8A" stroke-width="0.8"/><path d="M2 2 L6 6 M6 3.5 V6 H3.5" fill="none" stroke="#555" stroke-width="1"/></svg>
<div style="position:absolute;left:1180px;top:68px;width:1px;height:84px;background:#C6C6C6"></div>
<svg style="position:absolute;left:1192px;top:71px;" width="15" height="14" viewBox="0 0 15 14"><circle cx="9.5" cy="5" r="4.2" fill="none" stroke="#3F7CC0" stroke-width="1.9"/><path d="M6.5 8 L1.5 13" stroke="#3F7CC0" stroke-width="2.6" stroke-linecap="round"/></svg>
<span style="position:absolute;left:1211.7px;top:72.14px;font-family:'Liberation Sans';font-size:12px;font-weight:normal;color:#262626;line-height:normal;white-space:pre;transform:scaleX(0.9077);transform-origin:0 0;">Buscar</span>
<svg style="position:absolute;left:1258px;top:77px;" width="7" height="5" viewBox="0 0 7 5"><path d="M0.5 0.5 L3 3 L5.5 0.5" fill="none" stroke="#444" stroke-width="1"/></svg>
<svg style="position:absolute;left:1191px;top:93px;" width="18" height="16" viewBox="0 0 18 16"><text x="0" y="8" font-family="Liberation Sans" font-weight="bold" font-size="9.5" fill="#666">a</text><text x="6" y="8" font-family="Liberation Sans" font-weight="bold" font-size="9.5" fill="#8B4FB8">b</text><text x="5" y="15.5" font-family="Liberation Sans" font-weight="bold" font-size="9.5" fill="#666">a</text><text x="11" y="15.5" font-family="Liberation Sans" font-weight="bold" font-size="9.5" fill="#3B7BC8">c</text><path d="M3.5 10 V13 M1.5 11.5 L3.5 13.5 L5 12" fill="none" stroke="#3B7BC8" stroke-width="1"/></svg>
<span style="position:absolute;left:1211.7px;top:94.94px;font-family:'Liberation Sans';font-size:12px;font-weight:normal;color:#262626;line-height:normal;white-space:pre;transform:scaleX(0.9321);transform-origin:0 0;">Reemplazar</span>
<svg style="position:absolute;left:1195px;top:115px;" width="11" height="16" viewBox="0 0 11 16"><path d="M1 1 V13 L4 10 L6.5 15 L8.5 14 L6 9 H10 Z" fill="#fff" stroke="#555" stroke-width="1"/></svg>
<span style="position:absolute;left:1211.7px;top:117.94px;font-family:'Liberation Sans';font-size:12px;font-weight:normal;color:#262626;line-height:normal;white-space:pre;transform:scaleX(0.9505);transform-origin:0 0;">Seleccionar</span>
<svg style="position:absolute;left:1275px;top:123px;" width="7" height="5" viewBox="0 0 7 5"><path d="M0.5 0.5 L3 3 L5.5 0.5" fill="none" stroke="#444" stroke-width="1"/></svg>
<span style="position:absolute;left:1219px;top:140.44px;font-family:'Liberation Sans';font-size:12px;font-weight:normal;color:#262626;line-height:normal;white-space:pre;transform:scaleX(0.9401);transform-origin:0 0;">Edición</span>
<div style="position:absolute;left:1296px;top:68px;width:1px;height:84px;background:#C6C6C6"></div>
<svg style="position:absolute;left:1337px;top:143px;" width="15" height="9" viewBox="0 0 15 9"><path d="M0.5 8 L7 1.5 L13.5 8" fill="none" stroke="#555" stroke-width="1.2"/></svg>
<svg style="position:absolute;left:9px;top:164px;" width="22" height="22" viewBox="0 0 22 22"><circle cx="11" cy="11" r="11" fill="#3C77B8"/><circle cx="11" cy="6" r="1.6" fill="#fff"/><rect x="9.7" y="8.7" width="2.6" height="8.5" fill="#fff"/></svg>
<span style="position:absolute;left:40.6px;top:168.14px;font-family:'Liberation Sans';font-size:12px;font-weight:normal;color:#333;line-height:normal;white-space:pre;transform:scaleX(0.9033);transform-origin:0 0;">OBTENGA OFFICE AUTÉNTICO</span>
<span style="position:absolute;left:213.9px;top:160.14px;font-family:'Liberation Sans';font-size:12px;font-weight:normal;color:#333;line-height:normal;white-space:pre;transform:scaleX(0.9777);transform-origin:0 0;">Su licencia no es original y puede ser víctima de una falsificación de software. Evite las interrupciones y mantenga sus archivos a salvo con una</span>
<span style="position:absolute;left:213.9px;top:175.64px;font-family:'Liberation Sans';font-size:12px;font-weight:normal;color:#333;line-height:normal;white-space:pre;transform:scaleX(1.0057);transform-origin:0 0;">licencia original de Office hoy mismo.</span>
<div style="position:absolute;left:1010px;top:163px;width:166px;height:20px;background:#FDFDFD;border:1px solid #ABABAB"></div>
<span style="position:absolute;left:1026px;top:167.74px;font-family:'Liberation Sans';font-size:12px;font-weight:normal;color:#333;line-height:normal;white-space:pre;transform:scaleX(1.0035);transform-origin:0 0;">Obtenga Office auténtico</span>
<div style="position:absolute;left:1187px;top:163px;width:122px;height:20px;background:#FDFDFD;border:1px solid #ABABAB"></div>
<span style="position:absolute;left:1203px;top:167.74px;font-family:'Liberation Sans';font-size:12px;font-weight:normal;color:#333;line-height:normal;white-space:pre;transform:scaleX(1.0110);transform-origin:0 0;">Más información</span>
<svg style="position:absolute;left:1341px;top:170px;" width="9" height="9" viewBox="0 0 9 9"><path d="M1 1 L8 8 M8 1 L1 8" stroke="#555" stroke-width="1.8"/></svg>
<span style="position:absolute;left:14.6px;top:207.40px;font-family:'Liberation Sans';font-size:20px;font-weight:normal;color:#262626;line-height:normal;white-space:pre;transform:scaleX(1.0159);transform-origin:0 0;">Navegación</span>
<svg style="position:absolute;left:277px;top:210px;" width="15" height="9" viewBox="0 0 15 9"><path d="M0.5 0.5 L7.5 7.5 L14.5 0.5" fill="none" stroke="#444" stroke-width="1.1"/></svg>
<svg style="position:absolute;left:321px;top:209px;" width="11" height="11" viewBox="0 0 11 11"><path d="M0.5 0.5 L10.5 10.5 M10.5 0.5 L0.5 10.5" stroke="#444" stroke-width="1.1"/></svg>
<div style="position:absolute;left:14px;top:245px;width:315px;height:22px;background:#fff;border:1px solid #ABABAB"></div>
<span style="position:absolute;left:21px;top:249.14px;font-family:'Liberation Sans';font-size:12px;font-weight:normal;color:#666;line-height:normal;white-space:pre;transform:scaleX(0.9886);transform-origin:0 0;">Buscar en documento</span>
<svg style="position:absolute;left:304px;top:249px;" width="15" height="14" viewBox="0 0 15 14"><circle cx="9.5" cy="5" r="4" fill="none" stroke="#2B579A" stroke-width="1.8"/><path d="M6.5 8 L1.5 13" stroke="#2B579A" stroke-width="2.4"/></svg>
<svg style="position:absolute;left:322px;top:256px;" width="6" height="4" viewBox="0 0 6 4"><path d="M0.5 0.5 L3 3 L5.5 0.5" fill="none" stroke="#444" stroke-width="0.9"/></svg>
<span style="position:absolute;left:14.6px;top:286.89px;font-family:'Liberation Sans';font-size:12.5px;font-weight:bold;color:#2B579A;line-height:normal;white-space:pre;transform:scaleX(0.9007);transform-origin:0 0;">Títulos</span>
<span style="position:absolute;left:77.2px;top:287.34px;font-family:'Liberation Sans';font-size:12px;font-weight:normal;color:#333;line-height:normal;white-space:pre;transform:scaleX(0.9362);transform-origin:0 0;">Páginas</span>
<span style="position:absolute;left:144.5px;top:287.34px;font-family:'Liberation Sans';font-size:12px;font-weight:normal;color:#333;line-height:normal;white-space:pre;transform:scaleX(0.9311);transform-origin:0 0;">Resultados</span>
<div style="position:absolute;left:14px;top:308px;width:39px;height:3px;background:#2B579A"></div>
<span style="position:absolute;left:14.6px;top:335.44px;font-family:'Liberation Sans';font-size:12px;font-weight:normal;color:#3B3B3B;line-height:normal;white-space:pre;transform:scaleX(0.9867);transform-origin:0 0;">Cree un esquema interactivo de su documento.</span>
<span style="position:absolute;left:14.6px;top:367.24px;font-family:'Liberation Sans';font-size:12px;font-weight:normal;color:#3B3B3B;line-height:normal;white-space:pre;transform:scaleX(0.9592);transform-origin:0 0;">Es una buena manera de saber dónde se encuentra o</span>
<span style="position:absolute;left:14.6px;top:383.54px;font-family:'Liberation Sans';font-size:12px;font-weight:normal;color:#3B3B3B;line-height:normal;white-space:pre;transform:scaleX(0.9951);transform-origin:0 0;">moverse rápidamente por el contenido.</span>
<span style="position:absolute;left:14.6px;top:415.64px;font-family:'Liberation Sans';font-size:12px;font-weight:normal;color:#3B3B3B;line-height:normal;white-space:pre;transform:scaleX(0.9630);transform-origin:0 0;">Para comenzar, vaya a la pestaña Inicio y aplique estilos de</span>
<span style="position:absolute;left:14.6px;top:431.14px;font-family:'Liberation Sans';font-size:12px;font-weight:normal;color:#3B3B3B;line-height:normal;white-space:pre;transform:scaleX(1.0033);transform-origin:0 0;">título a los títulos de su documento.</span>
<div style="position:absolute;left:350px;top:191px;width:23px;height:21px;background:#D9D9D9"></div>
<div style="position:absolute;left:353px;top:194px;width:16px;height:14px;background:#FFFFFF"></div>
<svg style="position:absolute;left:357px;top:197px;" width="8" height="8" viewBox="0 0 8 8"><path d="M1.5 0.5 V6.5 H7" fill="none" stroke="#444" stroke-width="1.6"/></svg>
<div style="position:absolute;left:461px;top:196px;width:107px;height:10px;background:#C6C6C6"></div>
<div style="position:absolute;left:568px;top:196px;width:620px;height:10px;background:#FFFFFF"></div>
<div style="position:absolute;left:1188px;top:196px;width:69px;height:10px;background:#C6C6C6"></div>
<svg style="position:absolute;left:461px;top:196px;" width="796" height="10" viewBox="0 0 796 10"><rect x="6.0" y="5.2" width="1.2" height="1.2" fill="#444"/><rect x="15.5" y="4" width="1" height="4.5" fill="#444"/><rect x="24.8" y="5.2" width="1.2" height="1.2" fill="#444"/><rect x="43.8" y="5.2" width="1.2" height="1.2" fill="#444"/><rect x="53.3" y="4" width="1" height="4.5" fill="#444"/><rect x="62.6" y="5.2" width="1.2" height="1.2" fill="#444"/><rect x="81.5" y="5.2" width="1.2" height="1.2" fill="#444"/><rect x="91.1" y="4" width="1" height="4.5" fill="#444"/><rect x="100.4" y="5.2" width="1.2" height="1.2" fill="#444"/><rect x="119.4" y="5.2" width="1.2" height="1.2" fill="#444"/><rect x="128.9" y="4" width="1" height="4.5" fill="#444"/><rect x="138.3" y="5.2" width="1.2" height="1.2" fill="#444"/><rect x="157.2" y="5.2" width="1.2" height="1.2" fill="#444"/><rect x="166.7" y="4" width="1" height="4.5" fill="#444"/><rect x="176.0" y="5.2" width="1.2" height="1.2" fill="#444"/><rect x="194.9" y="5.2" width="1.2" height="1.2" fill="#444"/><rect x="204.5" y="4" width="1" height="4.5" fill="#444"/><rect x="213.9" y="5.2" width="1.2" height="1.2" fill="#444"/><rect x="232.8" y="5.2" width="1.2" height="1.2" fill="#444"/><rect x="242.3" y="4" width="1" height="4.5" fill="#444"/><rect x="251.7" y="5.2" width="1.2" height="1.2" fill="#444"/><rect x="270.5" y="5.2" width="1.2" height="1.2" fill="#444"/><rect x="280.1" y="4" width="1" height="4.5" fill="#444"/><rect x="289.4" y="5.2" width="1.2" height="1.2" fill="#444"/><rect x="308.4" y="5.2" width="1.2" height="1.2" fill="#444"/><rect x="317.9" y="4" width="1" height="4.5" fill="#444"/><rect x="327.2" y="5.2" width="1.2" height="1.2" fill="#444"/><rect x="346.1" y="5.2" width="1.2" height="1.2" fill="#444"/><rect x="355.7" y="4" width="1" height="4.5" fill="#444"/><rect x="365.0" y="5.2" width="1.2" height="1.2" fill="#444"/><rect x="383.9" y="5.2" width="1.2" height="1.2" fill="#444"/><rect x="393.5" y="4" width="1" height="4.5" fill="#444"/><rect x="402.9" y="5.2" width="1.2" height="1.2" fill="#444"/><rect x="421.7" y="5.2" width="1.2" height="1.2" fill="#444"/><rect x="431.3" y="4" width="1" height="4.5" fill="#444"/><rect x="440.6" y="5.2" width="1.2" height="1.2" fill="#444"/><rect x="459.5" y="5.2" width="1.2" height="1.2" fill="#444"/><rect x="469.1" y="4" width="1" height="4.5" fill="#444"/><rect x="478.4" y="5.2" width="1.2" height="1.2" fill="#444"/><rect x="497.4" y="5.2" width="1.2" height="1.2" fill="#444"/><rect x="506.9" y="4" width="1" height="4.5" fill="#444"/><rect x="516.2" y="5.2" width="1.2" height="1.2" fill="#444"/><rect x="535.1" y="5.2" width="1.2" height="1.2" fill="#444"/><rect x="544.7" y="4" width="1" height="4.5" fill="#444"/><rect x="554.0" y="5.2" width="1.2" height="1.2" fill="#444"/><rect x="572.9" y="5.2" width="1.2" height="1.2" fill="#444"/><rect x="582.5" y="4" width="1" height="4.5" fill="#444"/><rect x="591.9" y="5.2" width="1.2" height="1.2" fill="#444"/><rect x="610.7" y="5.2" width="1.2" height="1.2" fill="#444"/><rect x="620.3" y="4" width="1" height="4.5" fill="#444"/><rect x="629.6" y="5.2" width="1.2" height="1.2" fill="#444"/><rect x="648.6" y="5.2" width="1.2" height="1.2" fill="#444"/><rect x="658.1" y="4" width="1" height="4.5" fill="#444"/><rect x="667.4" y="5.2" width="1.2" height="1.2" fill="#444"/><rect x="686.3" y="5.2" width="1.2" height="1.2" fill="#444"/><rect x="695.9" y="4" width="1" height="4.5" fill="#444"/><rect x="705.2" y="5.2" width="1.2" height="1.2" fill="#444"/><rect x="724.1" y="5.2" width="1.2" height="1.2" fill="#444"/><rect x="733.7" y="4" width="1" height="4.5" fill="#444"/><rect x="743.1" y="5.2" width="1.2" height="1.2" fill="#444"/><rect x="761.9" y="5.2" width="1.2" height="1.2" fill="#444"/><rect x="771.5" y="4" width="1" height="4.5" fill="#444"/><rect x="780.8" y="5.2" width="1.2" height="1.2" fill="#444"/></svg>
<span style="position:absolute;left:493.29999999999995px;top:196.40px;font-family:'Liberation Sans';font-size:9.5px;font-weight:normal;color:#444;line-height:normal;white-space:pre;transform:scaleX(0.9842);transform-origin:0 0;">2</span>
<span style="position:absolute;left:531.1px;top:196.40px;font-family:'Liberation Sans';font-size:9.5px;font-weight:normal;color:#444;line-height:normal;white-space:pre;transform:scaleX(0.9842);transform-origin:0 0;">1</span>
<span style="position:absolute;left:606.6999999999999px;top:196.40px;font-family:'Liberation Sans';font-size:9.5px;font-weight:normal;color:#444;line-height:normal;white-space:pre;transform:scaleX(0.9842);transform-origin:0 0;">1</span>
<span style="position:absolute;left:644.5px;top:196.40px;font-family:'Liberation Sans';font-size:9.5px;font-weight:normal;color:#444;line-height:normal;white-space:pre;transform:scaleX(0.9842);transform-origin:0 0;">2</span>
<span style="position:absolute;left:682.3px;top:196.40px;font-family:'Liberation Sans';font-size:9.5px;font-weight:normal;color:#444;line-height:normal;white-space:pre;transform:scaleX(0.9842);transform-origin:0 0;">3</span>
<span style="position:absolute;left:720.1px;top:196.40px;font-family:'Liberation Sans';font-size:9.5px;font-weight:normal;color:#444;line-height:normal;white-space:pre;transform:scaleX(0.9842);transform-origin:0 0;">4</span>
<span style="position:absolute;left:757.9px;top:196.40px;font-family:'Liberation Sans';font-size:9.5px;font-weight:normal;color:#444;line-height:normal;white-space:pre;transform:scaleX(0.9842);transform-origin:0 0;">5</span>
<span style="position:absolute;left:795.6999999999999px;top:196.40px;font-family:'Liberation Sans';font-size:9.5px;font-weight:normal;color:#444;line-height:normal;white-space:pre;transform:scaleX(0.9842);transform-origin:0 0;">6</span>
<span style="position:absolute;left:833.4999999999999px;top:196.40px;font-family:'Liberation Sans';font-size:9.5px;font-weight:normal;color:#444;line-height:normal;white-space:pre;transform:scaleX(0.9842);transform-origin:0 0;">7</span>
<span style="position:absolute;left:871.3px;top:196.40px;font-family:'Liberation Sans';font-size:9.5px;font-weight:normal;color:#444;line-height:normal;white-space:pre;transform:scaleX(0.9842);transform-origin:0 0;">8</span>
<span style="position:absolute;left:909.1px;top:196.40px;font-family:'Liberation Sans';font-size:9.5px;font-weight:normal;color:#444;line-height:normal;white-space:pre;transform:scaleX(0.9842);transform-origin:0 0;">9</span>
<span style="position:absolute;left:944.3px;top:196.40px;font-family:'Liberation Sans';font-size:9.5px;font-weight:normal;color:#444;line-height:normal;white-space:pre;transform:scaleX(0.9842);transform-origin:0 0;">10</span>
<span style="position:absolute;left:982.0999999999999px;top:196.40px;font-family:'Liberation Sans';font-size:9.5px;font-weight:normal;color:#444;line-height:normal;white-space:pre;transform:scaleX(1.0546);transform-origin:0 0;">11</span>
<span style="position:absolute;left:1019.8999999999999px;top:196.40px;font-family:'Liberation Sans';font-size:9.5px;font-weight:normal;color:#444;line-height:normal;white-space:pre;transform:scaleX(0.9842);transform-origin:0 0;">12</span>
<span style="position:absolute;left:1057.7px;top:196.40px;font-family:'Liberation Sans';font-size:9.5px;font-weight:normal;color:#444;line-height:normal;white-space:pre;transform:scaleX(0.9842);transform-origin:0 0;">13</span>
<span style="position:absolute;left:1095.4999999999998px;top:196.40px;font-family:'Liberation Sans';font-size:9.5px;font-weight:normal;color:#444;line-height:normal;white-space:pre;transform:scaleX(0.9842);transform-origin:0 0;">14</span>
<span style="position:absolute;left:1133.3px;top:196.40px;font-family:'Liberation Sans';font-size:9.5px;font-weight:normal;color:#444;line-height:normal;white-space:pre;transform:scaleX(0.9842);transform-origin:0 0;">15</span>
<span style="position:absolute;left:1171.1px;top:196.40px;font-family:'Liberation Sans';font-size:9.5px;font-weight:normal;color:#444;line-height:normal;white-space:pre;transform:scaleX(0.9842);transform-origin:0 0;">16</span>
<span style="position:absolute;left:1208.8999999999999px;top:196.40px;font-family:'Liberation Sans';font-size:9.5px;font-weight:normal;color:#444;line-height:normal;white-space:pre;transform:scaleX(0.9842);transform-origin:0 0;">17</span>
<span style="position:absolute;left:1246.7px;top:196.40px;font-family:'Liberation Sans';font-size:9.5px;font-weight:normal;color:#444;line-height:normal;white-space:pre;transform:scaleX(0.9842);transform-origin:0 0;">18</span>
<svg style="position:absolute;left:567px;top:193px;" width="11" height="23" viewBox="0 0 11 23"><path d="M0.5 0.5 H9.5 L5 7.5 Z" fill="#fff" stroke="#8A8A8A"/><path d="M0.5 15.5 L5 7.5 L9.5 15.5 Z" fill="#fff" stroke="#8A8A8A"/><rect x="0.5" y="15.5" width="9" height="6" fill="#fff" stroke="#8A8A8A"/></svg>
<svg style="position:absolute;left:561px;top:197px;" width="7" height="8" viewBox="0 0 7 8"><path d="M0 1.5 H7 M0 4 H7 M0 6.5 H7 M1.5 0 V8 M4 0 V8" stroke="#777" stroke-width="0.9"/></svg>
<svg style="position:absolute;left:1186px;top:201px;" width="10" height="8" viewBox="0 0 10 8"><path d="M0.5 7.5 V4 L4.5 0.5 L8.5 4 V7.5 Z" fill="#fff" stroke="#8A8A8A"/></svg>
<svg style="position:absolute;left:1190px;top:197px;" width="7" height="8" viewBox="0 0 7 8"><path d="M0 1.5 H7 M0 4 H7 M0 6.5 H7 M1.5 0 V8 M4 0 V8" stroke="#777" stroke-width="0.9"/></svg>
<div style="position:absolute;left:355px;top:215px;width:11px;height:491px;background:#FFFFFF"></div>
<svg style="position:absolute;left:355px;top:215px;" width="11" height="491" viewBox="0 0 11 491"><rect x="6.5" y="2.8" width="1.2" height="1.2" fill="#555"/><rect x="6.5" y="21.8" width="1.2" height="1.2" fill="#555"/><rect x="5" y="31.2" width="5" height="1" fill="#555"/><rect x="6.5" y="40.6" width="1.2" height="1.2" fill="#555"/><rect x="6.5" y="59.5" width="1.2" height="1.2" fill="#555"/><rect x="5" y="69.0" width="5" height="1" fill="#555"/><rect x="6.5" y="78.4" width="1.2" height="1.2" fill="#555"/><rect x="6.5" y="97.3" width="1.2" height="1.2" fill="#555"/><rect x="5" y="106.8" width="5" height="1" fill="#555"/><rect x="6.5" y="116.2" width="1.2" height="1.2" fill="#555"/><rect x="6.5" y="135.1" width="1.2" height="1.2" fill="#555"/><rect x="5" y="144.6" width="5" height="1" fill="#555"/><rect x="6.5" y="154.0" width="1.2" height="1.2" fill="#555"/><rect x="6.5" y="172.9" width="1.2" height="1.2" fill="#555"/><rect x="5" y="182.4" width="5" height="1" fill="#555"/><rect x="6.5" y="191.8" width="1.2" height="1.2" fill="#555"/><rect x="6.5" y="210.7" width="1.2" height="1.2" fill="#555"/><rect x="5" y="220.2" width="5" height="1" fill="#555"/><rect x="6.5" y="229.6" width="1.2" height="1.2" fill="#555"/><rect x="6.5" y="248.5" width="1.2" height="1.2" fill="#555"/><rect x="5" y="258.0" width="5" height="1" fill="#555"/><rect x="6.5" y="267.4" width="1.2" height="1.2" fill="#555"/><rect x="6.5" y="286.3" width="1.2" height="1.2" fill="#555"/><rect x="5" y="295.8" width="5" height="1" fill="#555"/><rect x="6.5" y="305.2" width="1.2" height="1.2" fill="#555"/><rect x="6.5" y="324.1" width="1.2" height="1.2" fill="#555"/><rect x="5" y="333.6" width="5" height="1" fill="#555"/><rect x="6.5" y="343.0" width="1.2" height="1.2" fill="#555"/><rect x="6.5" y="361.9" width="1.2" height="1.2" fill="#555"/><rect x="5" y="371.4" width="5" height="1" fill="#555"/><rect x="6.5" y="380.8" width="1.2" height="1.2" fill="#555"/><rect x="6.5" y="399.8" width="1.2" height="1.2" fill="#555"/><rect x="5" y="409.2" width="5" height="1" fill="#555"/><rect x="6.5" y="418.6" width="1.2" height="1.2" fill="#555"/><rect x="6.5" y="437.5" width="1.2" height="1.2" fill="#555"/><rect x="5" y="447.0" width="5" height="1" fill="#555"/><rect x="6.5" y="456.5" width="1.2" height="1.2" fill="#555"/><rect x="6.5" y="475.3" width="1.2" height="1.2" fill="#555"/><rect x="5" y="484.8" width="5" height="1" fill="#555"/></svg>
<span style="position:absolute;left:350.5px;top:221.79999999999998px;width:20px;height:12px;text-align:center;font-family:'Liberation Sans';font-size:9.5px;line-height:12px;color:#444;transform:rotate(-90deg)">2</span>
<span style="position:absolute;left:350.5px;top:259.59999999999997px;width:20px;height:12px;text-align:center;font-family:'Liberation Sans';font-size:9.5px;line-height:12px;color:#444;transform:rotate(-90deg)">3</span>
<span style="position:absolute;left:350.5px;top:297.4px;width:20px;height:12px;text-align:center;font-family:'Liberation Sans';font-size:9.5px;line-height:12px;color:#444;transform:rotate(-90deg)">4</span>
<span style="position:absolute;left:350.5px;top:335.2px;width:20px;height:12px;text-align:center;font-family:'Liberation Sans';font-size:9.5px;line-height:12px;color:#444;transform:rotate(-90deg)">5</span>
<span style="position:absolute;left:350.5px;top:373.0px;width:20px;height:12px;text-align:center;font-family:'Liberation Sans';font-size:9.5px;line-height:12px;color:#444;transform:rotate(-90deg)">6</span>
<span style="position:absolute;left:350.5px;top:410.79999999999995px;width:20px;height:12px;text-align:center;font-family:'Liberation Sans';font-size:9.5px;line-height:12px;color:#444;transform:rotate(-90deg)">7</span>
<span style="position:absolute;left:350.5px;top:448.59999999999997px;width:20px;height:12px;text-align:center;font-family:'Liberation Sans';font-size:9.5px;line-height:12px;color:#444;transform:rotate(-90deg)">8</span>
<span style="position:absolute;left:350.5px;top:486.4px;width:20px;height:12px;text-align:center;font-family:'Liberation Sans';font-size:9.5px;line-height:12px;color:#444;transform:rotate(-90deg)">9</span>
<span style="position:absolute;left:350.5px;top:524.2px;width:20px;height:12px;text-align:center;font-family:'Liberation Sans';font-size:9.5px;line-height:12px;color:#444;transform:rotate(-90deg)">10</span>
<span style="position:absolute;left:350.5px;top:562.0px;width:20px;height:12px;text-align:center;font-family:'Liberation Sans';font-size:9.5px;line-height:12px;color:#444;transform:rotate(-90deg)">11</span>
<span style="position:absolute;left:350.5px;top:599.8px;width:20px;height:12px;text-align:center;font-family:'Liberation Sans';font-size:9.5px;line-height:12px;color:#444;transform:rotate(-90deg)">12</span>
<span style="position:absolute;left:350.5px;top:637.5999999999999px;width:20px;height:12px;text-align:center;font-family:'Liberation Sans';font-size:9.5px;line-height:12px;color:#444;transform:rotate(-90deg)">13</span>
<span style="position:absolute;left:350.5px;top:675.3999999999999px;width:20px;height:12px;text-align:center;font-family:'Liberation Sans';font-size:9.5px;line-height:12px;color:#444;transform:rotate(-90deg)">14</span>
<div style="position:absolute;left:355px;top:321px;width:11px;height:7px;background:#C6C6C6"></div>
<div style="position:absolute;left:355px;top:344px;width:11px;height:7px;background:#C6C6C6"></div>
<div style="position:absolute;left:355px;top:371px;width:11px;height:7px;background:#C6C6C6"></div>
<div style="position:absolute;left:355px;top:398px;width:11px;height:7px;background:#C6C6C6"></div>
<div style="position:absolute;left:355px;top:435px;width:11px;height:7px;background:#C6C6C6"></div>
<div style="position:absolute;left:355px;top:463px;width:11px;height:7px;background:#C6C6C6"></div>
<div style="position:absolute;left:355px;top:499px;width:11px;height:7px;background:#C6C6C6"></div>
<div style="position:absolute;left:355px;top:566px;width:11px;height:7px;background:#C6C6C6"></div>
<div style="position:absolute;left:355px;top:653px;width:11px;height:7px;background:#C6C6C6"></div>
<div style="position:absolute;left:462px;top:215px;width:1px;height:491px;background:#C8C8C8"></div>
<div style="position:absolute;left:463px;top:215px;width:791px;height:491px;background:#FFFFFF"></div>
<div style="position:absolute;left:1254px;top:215px;width:1px;height:491px;background:#C8C8C8"></div>
<div style="position:absolute;left:1344px;top:217px;width:16px;height:489px;background:#F0F0F0"></div>
<div style="position:absolute;left:1344px;top:217px;width:14px;height:14px;background:#fff;border:1px solid #ABABAB;box-sizing:border-box"></div>
<svg style="position:absolute;left:1347px;top:221px;" width="8" height="5" viewBox="0 0 8 5"><path d="M0 4.5 L4 0.5 L8 4.5 Z" fill="#222"/></svg>
<div style="position:absolute;left:1344px;top:245px;width:15px;height:28px;background:#fff;border:1px solid #ABABAB;box-sizing:border-box"></div>
<div style="position:absolute;left:1344px;top:689px;width:14px;height:15px;background:#fff;border:1px solid #ABABAB;box-sizing:border-box"></div>
<svg style="position:absolute;left:1347px;top:694px;" width="8" height="5" viewBox="0 0 8 5"><path d="M0 0.5 L4 4.5 L8 0.5 Z" fill="#222"/></svg>
<div style="position:absolute;left:565px;top:228px;width:633px;height:237px;background:#000"></div>
<div style="position:absolute;left:566px;top:229px;width:631px;height:93px;background:#2E74B5"></div>
<div style="position:absolute;left:566px;top:323px;width:631px;height:23px;background:#FFFFFF"></div>
<div style="position:absolute;left:566px;top:347px;width:216px;height:53px;background:#DEEAF6"></div>
<div style="position:absolute;left:566px;top:401px;width:216px;height:35px;background:#DEEAF6"></div>
<div style="position:absolute;left:566px;top:437px;width:216px;height:27px;background:#DEEAF6"></div>
<div style="position:absolute;left:783px;top:347px;width:140px;height:26px;background:#DADADA"></div>
<div style="position:absolute;left:924px;top:347px;width:43px;height:26px;background:#FFFFFF"></div>
<div style="position:absolute;left:968px;top:347px;width:192px;height:26px;background:#DADADA"></div>
<div style="position:absolute;left:1161px;top:347px;width:36px;height:26px;background:#FFFFFF"></div>
<div style="position:absolute;left:783px;top:374px;width:140px;height:26px;background:#DADADA"></div>
<div style="position:absolute;left:924px;top:374px;width:43px;height:26px;background:#FFFFFF"></div>
<div style="position:absolute;left:968px;top:374px;width:192px;height:26px;background:#DADADA"></div>
<div style="position:absolute;left:1161px;top:374px;width:36px;height:26px;background:#FFFFFF"></div>
<div style="position:absolute;left:783px;top:401px;width:414px;height:35px;background:#FFFFFF"></div>
<div style="position:absolute;left:783px;top:437px;width:414px;height:27px;background:#FFFFFF"></div>
<svg style="position:absolute;left:550px;top:214px;" width="16" height="15" viewBox="0 0 16 15"><rect x="0.5" y="0.5" width="14" height="13" fill="#fff" stroke="#AAAAAA"/><path d="M7.5 2.5 V11.5 M3 7 H12" stroke="#333" stroke-width="1"/><path d="M5.5 4 L7.5 2 L9.5 4 M5.5 10 L7.5 12 L9.5 10 M4.5 5 L2.5 7 L4.5 9 M10.5 5 L12.5 7 L10.5 9" fill="none" stroke="#333" stroke-width="1"/></svg>
<span style="position:absolute;left:651.5px;top:250.91px;font-family:'Liberation Sans';font-size:18px;font-weight:bold;color:#FFFFFF;line-height:normal;white-space:pre;transform:scaleX(1.0426);transform-origin:0 0;">ESTUDIO DE MERCADO PARA LA DEFINICIÓN DEL</span>
<span style="position:absolute;left:704.3px;top:283.49px;font-family:'Liberation Sans';font-size:22px;font-weight:normal;color:#FFFFFF;line-height:normal;white-space:pre;transform:scaleX(1.0889);transform-origin:0 0;-webkit-text-stroke:0.3px #fff">PRESUPUESTO REFERENCIAL</span>
<span style="position:absolute;left:573.3px;top:364.24px;font-family:'Liberation Sans';font-size:17.3px;font-weight:bold;color:#000000;line-height:normal;white-space:pre;transform:scaleX(0.9328);transform-origin:0 0;">Tipo de producto:</span>
<span style="position:absolute;left:573.3px;top:409.04px;font-family:'Liberation Sans';font-size:17.3px;font-weight:bold;color:#000000;line-height:normal;white-space:pre;transform:scaleX(0.9531);transform-origin:0 0;">Identificación del objeto:</span>
<span style="position:absolute;left:573.3px;top:440.54px;font-family:'Liberation Sans';font-size:17.3px;font-weight:bold;color:#000000;line-height:normal;white-space:pre;transform:scaleX(0.8533);transform-origin:0 0;">FECHA:</span>
<span style="position:absolute;left:632px;top:447.80px;font-family:'Liberation Sans';font-size:10.5px;font-weight:normal;color:#000000;line-height:normal;white-space:pre;transform:scaleX(0.9926);transform-origin:0 0;">(día/mes/año)</span>
<span style="position:absolute;left:834.3px;top:350.94px;font-family:'Liberation Sans';font-size:17.3px;font-weight:bold;color:#000000;line-height:normal;white-space:pre;transform:scaleX(0.9421);transform-origin:0 0;">Obra</span>
<span style="position:absolute;left:822.3px;top:378.14px;font-family:'Liberation Sans';font-size:17.3px;font-weight:bold;color:#000000;line-height:normal;white-space:pre;transform:scaleX(0.9176);transform-origin:0 0;">Servicio</span>
<span style="position:absolute;left:940.8px;top:379.05px;font-family:'Liberation Sans';font-size:16.3px;font-weight:normal;color:#000000;line-height:normal;white-space:pre;transform:scaleX(0.8748);transform-origin:0 0;-webkit-text-stroke:0.4px #000">X</span>
<span style="position:absolute;left:1045.7px;top:350.94px;font-family:'Liberation Sans';font-size:17.3px;font-weight:bold;color:#000000;line-height:normal;white-space:pre;transform:scaleX(0.9773);transform-origin:0 0;">Bien</span>
<span style="position:absolute;left:1018.5px;top:378.14px;font-family:'Liberation Sans';font-size:17.3px;font-weight:bold;color:#000000;line-height:normal;white-space:pre;transform:scaleX(0.9343);transform-origin:0 0;">Consultoría</span>
<span style="position:absolute;left:790.4px;top:402.74px;font-family:'Liberation Sans';font-size:13px;font-weight:normal;color:#000000;line-height:normal;white-space:pre;transform:scaleX(1.0301);transform-origin:0 0;-webkit-text-stroke:0.1px #000">Implementación del sistema web y aplicaciones web para un año</span>
<span style="position:absolute;left:790.4px;top:420.24px;font-family:'Liberation Sans';font-size:13px;font-weight:normal;color:#000000;line-height:normal;white-space:pre;transform:scaleX(1.0173);transform-origin:0 0;-webkit-text-stroke:0.1px #000">del GAD Parroquial Valle Hermoso para el período 2023</span>
<span style="position:absolute;left:790.4px;top:443.54px;font-family:'Liberation Sans';font-size:13px;font-weight:normal;color:#000000;line-height:normal;white-space:pre;transform:scaleX(1.0205);transform-origin:0 0;-webkit-text-stroke:0.1px #000">31/01/2023</span>
<div style="position:absolute;left:565px;top:500px;width:633px;height:206px;overflow:hidden"><div style="position:absolute;left:0;top:0;width:633px;height:300px;background:#000"></div><div style="position:absolute;left:1px;top:1px;width:631px;height:65px;background:#E6E6E6"></div><div style="position:absolute;left:1px;top:67px;width:631px;height:86px;background:#E6E6E6"></div><div style="position:absolute;left:1px;top:154px;width:631px;height:140px;background:#E6E6E6"></div></div>
<span style="position:absolute;left:572.8px;top:504.21px;font-family:'Liberation Sans';font-size:10.6px;font-weight:bold;color:#000000;line-height:normal;white-space:pre;transform:scaleX(1.0303);transform-origin:0 0;-webkit-text-stroke:0.25px #000">Instrucciones:</span>
<span style="position:absolute;left:655.6px;top:504.21px;font-family:'Liberation Sans';font-size:10.6px;font-weight:normal;color:#000000;line-height:normal;white-space:pre;letter-spacing:1.083px;">El técnico del área requirente deberá llenar el presente formulario que contiene el estudio de</span>
<span style="position:absolute;left:572.8px;top:520.21px;font-family:'Liberation Sans';font-size:10.6px;font-weight:normal;color:#000000;line-height:normal;white-space:pre;letter-spacing:0.728px;">mercado para la determinación y justificación del presupuesto referencial, de conformidad con el Art. 49 del nuevo</span>
<span style="position:absolute;left:572.8px;top:537.11px;font-family:'Liberation Sans';font-size:10.6px;font-weight:normal;color:#000000;line-height:normal;white-space:pre;letter-spacing:1.025px;">Reglamento General de la LOSNCP, en concordancia con el numeral 26.1 del Art. 2 de la Codificación de las</span>
<span style="position:absolute;left:572.8px;top:553.11px;font-family:'Liberation Sans';font-size:10.6px;font-weight:normal;color:#000000;line-height:normal;white-space:pre;transform:scaleX(1.1108);transform-origin:0 0;">Resoluciones del SERCOP y las instrucciones que a continuación se detallan:</span>
<div style="position:absolute;left:789px;top:520px;width:1px;height:15px;background:#000"></div>
<span style="position:absolute;left:572.9px;top:568.85px;font-family:'Liberation Sans';font-size:10px;font-weight:bold;color:#000000;line-height:normal;white-space:pre;transform:scaleX(1.0051);transform-origin:0 0;-webkit-text-stroke:0.25px #000">Para el caso de obras:</span>
<span style="position:absolute;left:684.5px;top:568.85px;font-family:'Liberation Sans';font-size:10px;font-weight:normal;color:#000000;line-height:normal;white-space:pre;transform:scaleX(1.0895);transform-origin:0 0;-webkit-text-stroke:0.1px #000">Considerar la Norma de Control Interno de la Contraloría General del Estado 408-11.</span>
<span style="position:absolute;left:572.9px;top:582.55px;font-family:'Liberation Sans';font-size:10px;font-weight:bold;color:#000000;line-height:normal;white-space:pre;transform:scaleX(0.9988);transform-origin:0 0;-webkit-text-stroke:0.25px #000">Para el caso de consultorías</span>
<span style="position:absolute;left:708px;top:582.55px;font-family:'Liberation Sans';font-size:10px;font-weight:normal;color:#000000;line-height:normal;white-space:pre;transform:scaleX(1.0737);transform-origin:0 0;-webkit-text-stroke:0.1px #000">:  considerar el Art. 155 del nuevo Reglamento General de la LOSNCP.</span>
<span style="position:absolute;left:572.9px;top:597.55px;font-family:'Liberation Sans';font-size:10px;font-weight:bold;color:#000000;line-height:normal;white-space:pre;transform:scaleX(1.0112);transform-origin:0 0;-webkit-text-stroke:0.25px #000">Para el caso de bienes y servicios no normalizados:</span>
<span style="position:absolute;left:828.5px;top:597.55px;font-family:'Liberation Sans';font-size:10px;font-weight:normal;color:#000000;line-height:normal;white-space:pre;transform:scaleX(1.0740);transform-origin:0 0;-webkit-text-stroke:0.1px #000">considerar el numeral 18 del Art. 6 de la LOSNCP.</span>
<span style="position:absolute;left:572.9px;top:612.85px;font-family:'Liberation Sans';font-size:10px;font-weight:bold;color:#000000;line-height:normal;white-space:pre;transform:scaleX(1.0039);transform-origin:0 0;-webkit-text-stroke:0.25px #000">Para el caso de Subastas Inversas:</span>
<span style="position:absolute;left:744.5px;top:612.85px;font-family:'Liberation Sans';font-size:10px;font-weight:normal;color:#000000;line-height:normal;white-space:pre;transform:scaleX(1.0786);transform-origin:0 0;-webkit-text-stroke:0.1px #000">considerar el numeral 5 del Art. 130 del nuevo Reglamento General de la LOSNCP.</span>
<span style="position:absolute;left:572.9px;top:627.75px;font-family:'Liberation Sans';font-size:10px;font-weight:bold;color:#000000;line-height:normal;white-space:pre;letter-spacing:0.252px;-webkit-text-stroke:0.25px #000">Para el caso de contratación de consultorías para los estudios de ingeniería y diseño definitivo:</span>
<span style="position:absolute;left:1057.6px;top:627.75px;font-family:'Liberation Sans';font-size:10px;font-weight:normal;color:#000000;line-height:normal;white-space:pre;letter-spacing:0.511px;-webkit-text-stroke:0.1px #000">considerar el Art. 287 de la</span>
<span style="position:absolute;left:573.7px;top:642.85px;font-family:'Liberation Sans';font-size:10px;font-weight:normal;color:#000000;line-height:normal;white-space:pre;transform:scaleX(1.0550);transform-origin:0 0;-webkit-text-stroke:0.1px #000">Codificación y actualización de las resoluciones del SERCOP.</span>
<span style="position:absolute;left:572.9px;top:657.75px;font-family:'Liberation Sans';font-size:10px;font-weight:bold;color:#000000;line-height:normal;white-space:pre;transform:scaleX(1.0387);transform-origin:0 0;-webkit-text-stroke:0.25px #000">Ínfima cuantía:</span>
<span style="position:absolute;left:651.6px;top:657.75px;font-family:'Liberation Sans';font-size:10px;font-weight:normal;color:#000000;line-height:normal;white-space:pre;letter-spacing:0.485px;-webkit-text-stroke:0.1px #000">En los procedimientos de ínfima cuantía, el estudio de mercado para la definición del presupuesto referencial,</span>
<span style="position:absolute;left:573px;top:671.35px;font-family:'Liberation Sans';font-size:10px;font-weight:normal;color:#000000;line-height:normal;white-space:pre;transform:scaleX(1.1072);transform-origin:0 0;-webkit-text-stroke:0.1px #000">deberá cumplir únicamente lo establecido en los numerales 1 y 4 del presente formulario.</span>
<span style="position:absolute;left:572.9px;top:686.45px;font-family:'Liberation Sans';font-size:10px;font-weight:bold;color:#000000;line-height:normal;white-space:pre;transform:scaleX(0.9938);transform-origin:0 0;-webkit-text-stroke:0.25px #000">Catálogo Electrónico:</span>
<span style="position:absolute;left:681.5px;top:686.45px;font-family:'Liberation Sans';font-size:10px;font-weight:normal;color:#000000;line-height:normal;white-space:pre;transform:scaleX(1.0879);transform-origin:0 0;-webkit-text-stroke:0.1px #000">Se exceptúa el cálculo del presupuesto referencial en los procedimientos de Catálogo Electrónico.</span>
<div style="position:absolute;left:565px;top:700px;width:633px;height:6px;overflow:hidden">
<span style="position:absolute;left:8px;top:1.45px;font-family:'Liberation Sans';font-size:10px;font-weight:bold;color:#000000;line-height:normal;white-space:pre;transform:scaleX(1.0352);transform-origin:0 0;-webkit-text-stroke:0.25px #000">(Fundamento:</span>
<span style="position:absolute;left:81px;top:1.45px;font-family:'Liberation Sans';font-size:10px;font-weight:normal;color:#000000;line-height:normal;white-space:pre;transform:scaleX(1.0536);transform-origin:0 0;-webkit-text-stroke:0.1px #000">Codificación de Resoluciones SERCOP, Art. 26.1., segundo párrafo)</span>
</div>
<div style="position:absolute;left:0px;top:706px;width:1360px;height:1px;background:#DADADA"></div>
<span style="position:absolute;left:8.2px;top:710.54px;font-family:'Liberation Sans';font-size:12px;font-weight:normal;color:#444444;line-height:normal;white-space:pre;transform:scaleX(0.9181);transform-origin:0 0;">Página 1 de 7</span>
<span style="position:absolute;left:96px;top:710.54px;font-family:'Liberation Sans';font-size:12px;font-weight:normal;color:#444444;line-height:normal;white-space:pre;transform:scaleX(0.9295);transform-origin:0 0;">1629 palabras</span>
<svg style="position:absolute;left:185px;top:710px;" width="16" height="14" viewBox="0 0 16 14"><path d="M0.5 1.5 Q4 0 7.5 1.5 V12.5 Q4 11 0.5 12.5 Z M7.5 1.5 Q9 0.7 10 0.8 M7.5 12.5 Q9 11.5 11 11.8" fill="none" stroke="#555" stroke-width="0.9"/><path d="M10 2.5 L15 7.5 M15 2.5 L10 7.5" stroke="#555" stroke-width="1"/></svg>
<span style="position:absolute;left:218px;top:710.54px;font-family:'Liberation Sans';font-size:12px;font-weight:normal;color:#444444;line-height:normal;white-space:pre;transform:scaleX(0.9217);transform-origin:0 0;">Español (Ecuador)</span>
<svg style="position:absolute;left:327px;top:709px;" width="18" height="17" viewBox="0 0 18 17"><path d="M6 1 V6 L9.5 9.5" fill="none" stroke="#555" stroke-width="1.1"/><circle cx="6" cy="0.8" r="1" fill="#555"/><path d="M2.5 5 A5 5 0 1 0 8 13" fill="none" stroke="#555" stroke-width="1.1"/><path d="M10 9 L16 15 M16 9 L10 15" stroke="#333" stroke-width="1.6"/></svg>
<span style="position:absolute;left:347px;top:710.54px;font-family:'Liberation Sans';font-size:12px;font-weight:normal;color:#444444;line-height:normal;white-space:pre;transform:scaleX(0.9477);transform-origin:0 0;">Accesibilidad: es necesario investigar</span>
<svg style="position:absolute;left:1072px;top:710px;" width="14" height="14" viewBox="0 0 14 14"><g shape-rendering="crispEdges" fill="none" stroke="#555"><path d="M0.5 0.5 H6.5 V12.5 H0.5 Z M7.5 0.5 H13.5 V12.5 H7.5 Z"/></g><g shape-rendering="crispEdges" fill="#555"><rect x="2" y="3" width="3" height="1"/><rect x="2" y="5" width="3" height="1"/><rect x="2" y="7" width="3" height="1"/><rect x="9" y="3" width="3" height="1"/><rect x="9" y="5" width="3" height="1"/><rect x="9" y="7" width="3" height="1"/></g></svg>
<div style="position:absolute;left:1100px;top:707px;width:39px;height:21px;background:#C8C8C8"></div>
<svg style="position:absolute;left:1113px;top:710px;" width="14" height="14" viewBox="0 0 14 14"><g shape-rendering="crispEdges"><rect x="0.5" y="0.5" width="13" height="12" fill="none" stroke="#555"/><rect x="2" y="3" width="10" height="1" fill="#555"/><rect x="2" y="5" width="10" height="1" fill="#555"/><rect x="2" y="7" width="10" height="1" fill="#555"/><rect x="2" y="9" width="10" height="1" fill="#555"/></g></svg>
<svg style="position:absolute;left:1152px;top:710px;" width="17" height="14" viewBox="0 0 17 14"><rect x="0.5" y="0.5" width="12" height="11" fill="none" stroke="#555"/><path d="M2.5 3.5 H10.5 M2.5 6 H7 M2.5 8.5 H7" stroke="#555" stroke-width="0.9"/><circle cx="12" cy="10" r="3.5" fill="#F3F3F3" stroke="#555" stroke-width="1"/><path d="M8.5 10 H15.5 M12 6.5 Q10 10 12 13.5 Q14 10 12 6.5" fill="none" stroke="#555" stroke-width="0.7"/></svg>
<div style="position:absolute;left:1186px;top:716px;width:8px;height:1px;background:#444"></div>
<div style="position:absolute;left:1199px;top:717px;width:100px;height:1px;background:#666"></div>
<div style="position:absolute;left:1247px;top:711px;width:5px;height:12px;background:#444"></div>
<div style="position:absolute;left:1303px;top:716px;width:9px;height:1px;background:#444"></div>
<div style="position:absolute;left:1307px;top:712px;width:1px;height:9px;background:#444"></div>
<span style="position:absolute;left:1325.6px;top:710.54px;font-family:'Liberation Sans';font-size:12px;font-weight:normal;color:#444444;line-height:normal;white-space:pre;transform:scaleX(0.8569);transform-origin:0 0;">100%</span>
<div style="position:absolute;left:197px;top:728px;width:47px;height:40px;background:#2E2E2E"></div>
<svg style="position:absolute;left:16px;top:740px;" width="17" height="17" viewBox="0 0 17 17"><path d="M0 2.4 L6.8 1.4 V7.6 H0 Z M7.8 1.3 L17 0 V7.6 H7.8 Z M0 8.6 H6.8 V14.8 L0 13.8 Z M7.8 8.6 H17 V16.8 L7.8 15.5 Z" fill="#fff"/></svg>
<svg style="position:absolute;left:63px;top:739px;" width="19" height="19" viewBox="0 0 19 19"><circle cx="11.5" cy="7.5" r="6" fill="none" stroke="#fff" stroke-width="1.4"/><path d="M7.2 11.8 L1 18" stroke="#fff" stroke-width="1.6"/></svg>
<svg style="position:absolute;left:110px;top:736px;" width="25" height="25" viewBox="0 0 25 25"><defs><linearGradient id="eg1" x1="0" y1="0" x2="1" y2="1"><stop offset="0" stop-color="#35C1F1"/><stop offset="0.6" stop-color="#1F7FD6"/><stop offset="1" stop-color="#114A8B"/></linearGradient><linearGradient id="eg2" x1="0" y1="0" x2="1" y2="0"><stop offset="0" stop-color="#33BFF0"/><stop offset="1" stop-color="#66EB6E"/></linearGradient></defs><circle cx="12.5" cy="12.5" r="12.3" fill="url(#eg1)"/><path d="M3 9 Q8 1 16 3 Q24 6 23.5 13 Q23 17 18 17 Q13 17 14 12 Q12 9 8 10 Q5 11 3 14 Z" fill="url(#eg2)"/><ellipse cx="15" cy="14" rx="4" ry="3" fill="#114A8B"/></svg>
<svg style="position:absolute;left:160px;top:736px;" width="24" height="24" viewBox="0 0 24 24"><circle cx="12" cy="12" r="12" fill="#DB4437"/><path d="M12 12 L1.6 6 A12 12 0 0 0 12 24 Z" fill="#0F9D58"/><path d="M12 12 L12 24 A12 12 0 0 0 22.4 6 L12 6 Z" fill="#F4B400"/><path d="M12 6 H22.4 A12 12 0 0 0 1.6 6 L6.8 15 A6 6 0 0 1 12 6 Z" fill="#DB4437"/><circle cx="12" cy="12" r="5.5" fill="#fff"/><circle cx="12" cy="12" r="4.3" fill="#4285F4"/></svg>
<svg style="position:absolute;left:207px;top:736px;" width="28" height="24" viewBox="0 0 28 24"><rect x="7" y="0" width="20" height="24" rx="1.5" fill="#2B7CD3"/><rect x="7" y="0" width="20" height="6" fill="#41A5EE"/><rect x="7" y="6" width="20" height="6" fill="#2B7CD3"/><rect x="7" y="12" width="20" height="6" fill="#185ABD"/><rect x="7" y="18" width="20" height="6" fill="#103F91"/><rect x="0" y="5" width="14" height="14" rx="1" fill="#185ABD"/><text x="1.8" y="16.5" font-family="Liberation Sans" font-weight="bold" font-size="11" fill="#fff">W</text></svg>
<svg style="position:absolute;left:258px;top:738px;" width="24" height="21" viewBox="0 0 24 21"><path d="M0 2 Q0 0 2 0 H9 L11 3 H22 Q24 3 24 5 V19 Q24 21 22 21 H2 Q0 21 0 19 Z" fill="#E8A93A"/><rect x="0" y="6" width="24" height="15" rx="1" fill="#FFD65C"/><rect x="7" y="12" width="10" height="7" fill="#3C8DDA"/><rect x="9.5" y="14.5" width="5" height="4.5" fill="#FFD65C"/></svg>
<svg style="position:absolute;left:306px;top:736px;" width="26" height="24" viewBox="0 0 26 24"><rect x="6" y="0" width="20" height="24" rx="1.5" fill="#21A366"/><rect x="6" y="0" width="20" height="6" fill="#33C481"/><rect x="6" y="12" width="20" height="6" fill="#107C41"/><rect x="6" y="18" width="20" height="6" fill="#185C37"/><rect x="0" y="5" width="13" height="14" rx="1" fill="#107C41"/><text x="2.5" y="16.5" font-family="Liberation Sans" font-weight="bold" font-size="10.5" fill="#fff">X</text></svg>
<svg style="position:absolute;left:356px;top:736px;" width="24" height="25" viewBox="0 0 24 25"><defs><radialGradient id="ff1" cx="0.6" cy="0.2" r="0.9"><stop offset="0" stop-color="#FFE226"/><stop offset="0.4" stop-color="#FF7139"/><stop offset="0.8" stop-color="#E31587"/><stop offset="1" stop-color="#C42482"/></radialGradient></defs><path d="M12 2 Q15 0 18 1 Q17 3 19 5 Q24 9 23 15 Q22 23 12 24.5 Q2 24 1 15 Q1 9 4 6 Q4 9 6 10 Q7 5 12 2 Z" fill="url(#ff1)"/><circle cx="12" cy="14" r="6" fill="#7542E5"/><path d="M6 12 Q8 7 14 8 Q18 10 17 13" fill="#FF8A16"/></svg>
<svg style="position:absolute;left:404px;top:736px;" width="25" height="25" viewBox="0 0 25 25"><circle cx="12.5" cy="12.5" r="12.5" fill="#1ED760"/><path d="M5.5 8.7 Q13 6.5 19.5 9.8" fill="none" stroke="#111" stroke-width="2.2" stroke-linecap="round"/><path d="M6.3 12.5 Q12.5 10.8 18.3 13.5" fill="none" stroke="#111" stroke-width="1.9" stroke-linecap="round"/><path d="M7 16 Q12 14.8 17 17" fill="none" stroke="#111" stroke-width="1.6" stroke-linecap="round"/></svg>
<svg style="position:absolute;left:454px;top:737px;" width="26" height="25" viewBox="0 0 26 25"><circle cx="12" cy="12" r="12" fill="#DB4437"/><path d="M12 12 L1.6 6 A12 12 0 0 0 12 24 Z" fill="#0F9D58"/><path d="M12 12 L12 24 A12 12 0 0 0 22.4 6 L12 6 Z" fill="#F4B400"/><path d="M12 6 H22.4 A12 12 0 0 0 1.6 6 L6.8 15 A6 6 0 0 1 12 6 Z" fill="#DB4437"/><circle cx="12" cy="12" r="5.5" fill="#fff"/><circle cx="12" cy="12" r="4.3" fill="#4285F4"/><circle cx="19" cy="18.5" r="6.8" fill="#555"/><circle cx="19" cy="18.5" r="5.5" fill="#9A9A9A"/><circle cx="17" cy="17.5" r="1.2" fill="#222"/><circle cx="21" cy="17.5" r="1.2" fill="#222"/><path d="M16.5 21 Q19 23 21.5 21" fill="none" stroke="#333" stroke-width="1"/></svg>
<svg style="position:absolute;left:505px;top:736px;" width="20" height="25" viewBox="0 0 20 25"><rect x="0" y="0" width="19" height="24" fill="#fff"/><rect x="2" y="2" width="15" height="4" fill="#111"/><rect x="2" y="8.5" width="2.5" height="2.5" fill="#111"/><rect x="6" y="8.5" width="2.5" height="2.5" fill="#111"/><rect x="10" y="8.5" width="2.5" height="2.5" fill="#111"/><rect x="14" y="8.5" width="2.5" height="2.5" fill="#111"/><rect x="2" y="12.5" width="2.5" height="2.5" fill="#111"/><rect x="6" y="12.5" width="2.5" height="2.5" fill="#111"/><rect x="10" y="12.5" width="2.5" height="2.5" fill="#111"/><rect x="14" y="12.5" width="2.5" height="2.5" fill="#111"/><rect x="2" y="16.5" width="2.5" height="2.5" fill="#111"/><rect x="6" y="16.5" width="2.5" height="2.5" fill="#111"/><rect x="10" y="16.5" width="2.5" height="2.5" fill="#111"/><rect x="14" y="16.5" width="2.5" height="2.5" fill="#111"/><rect x="2" y="20.5" width="2.5" height="2.5" fill="#111"/><rect x="6" y="20.5" width="2.5" height="2.5" fill="#111"/><rect x="10" y="20.5" width="2.5" height="2.5" fill="#111"/><rect x="14" y="20.5" width="2.5" height="2.5" fill="#111"/></svg>
<svg style="position:absolute;left:551px;top:736px;" width="27" height="25" viewBox="0 0 27 25"><path d="M1 14 Q0 5 10 3 Q20 2 22 9 Q23 13 18 13 Q14 13 15 17 Q16 22 9 22 Q2 21 1 14 Z" fill="#C8D6E8" stroke="#7A8BA0" stroke-width="0.8"/><circle cx="6" cy="12" r="2" fill="#E23D3D"/><circle cx="8" cy="7.5" r="2" fill="#3DAF4F"/><circle cx="13" cy="6.5" r="2" fill="#3D7BE2"/><circle cx="18" cy="8.5" r="1.8" fill="#F2C230"/><path d="M26 1 L14 22" stroke="#E8A93A" stroke-width="2.2"/><path d="M24 2 L27 0 L26 4 Z" fill="#555"/></svg>
<div style="position:absolute;left:103px;top:766px;width:40px;height:2px;background:#76B9ED"></div>
<div style="position:absolute;left:197px;top:766px;width:44px;height:2px;background:#76B9ED"></div>
<div style="position:absolute;left:250px;top:766px;width:39px;height:2px;background:#76B9ED"></div>
<div style="position:absolute;left:299px;top:766px;width:39px;height:2px;background:#76B9ED"></div>
<div style="position:absolute;left:348px;top:766px;width:40px;height:2px;background:#76B9ED"></div>
<div style="position:absolute;left:397px;top:766px;width:40px;height:2px;background:#76B9ED"></div>
<div style="position:absolute;left:446px;top:766px;width:40px;height:2px;background:#76B9ED"></div>
<div style="position:absolute;left:495px;top:766px;width:39px;height:2px;background:#76B9ED"></div>
<div style="position:absolute;left:544px;top:766px;width:40px;height:2px;background:#76B9ED"></div>
<svg style="position:absolute;left:1117px;top:744px;" width="13" height="8" viewBox="0 0 13 8"><path d="M0.5 7.5 L6.5 1 L12.5 7.5" fill="none" stroke="#fff" stroke-width="1.1"/></svg>
<svg style="position:absolute;left:1140px;top:740px;" width="14" height="17" viewBox="0 0 14 17"><rect x="1" y="4" width="8" height="8" rx="1" fill="none" stroke="#fff" stroke-width="1"/><path d="M9 6.5 L12.5 4.5 V11.5 L9 9.5" fill="none" stroke="#fff" stroke-width="1"/><path d="M1 1 Q6 -1 11 1 M1 16 Q6 18 11 16" fill="none" stroke="#fff" stroke-width="1"/></svg>
<svg style="position:absolute;left:1162px;top:739px;" width="17" height="18" viewBox="0 0 17 18"><rect x="4.5" y="0.5" width="12" height="9" fill="none" stroke="#fff"/><rect x="0.5" y="4.5" width="5" height="10" fill="#111" stroke="#fff"/><path d="M10.5 9.5 V12.5 M7 13.5 H14 M3 17.5 H3" stroke="#fff"/></svg>
<svg style="position:absolute;left:1186px;top:740px;" width="18" height="16" viewBox="0 0 18 16"><path d="M0.5 5.5 H4 L8.5 1 V15 L4 10.5 H0.5 Z" fill="none" stroke="#fff" stroke-width="1"/><path d="M11 5 Q13 8 11 11 M13.5 3 Q17 8 13.5 13" fill="none" stroke="#fff" stroke-width="1"/></svg>
<span style="position:absolute;left:1215px;top:741.14px;font-family:'Liberation Sans';font-size:12px;font-weight:normal;color:#FFFFFF;line-height:normal;white-space:pre;transform:scaleX(0.7913);transform-origin:0 0;">ESP</span>
<span style="position:absolute;left:1261.5px;top:732.14px;font-family:'Liberation Sans';font-size:12px;font-weight:normal;color:#FFFFFF;line-height:normal;white-space:pre;transform:scaleX(0.8991);transform-origin:0 0;">12:47</span>
<span style="position:absolute;left:1252.5px;top:750.14px;font-family:'Liberation Sans';font-size:12px;font-weight:normal;color:#FFFFFF;line-height:normal;white-space:pre;transform:scaleX(0.9848);transform-origin:0 0;">1/3/2023</span>
<svg style="position:absolute;left:1319px;top:740px;" width="18" height="17" viewBox="0 0 18 17"><path d="M0.5 0.5 H17.5 V12.5 H10 L6.5 16 V12.5 H0.5 Z" fill="none" stroke="#fff" stroke-width="1.1"/></svg>
<div style="position:absolute;left:1355px;top:728px;width:1px;height:40px;background:#4A4A4A"></div>
</body></html>
